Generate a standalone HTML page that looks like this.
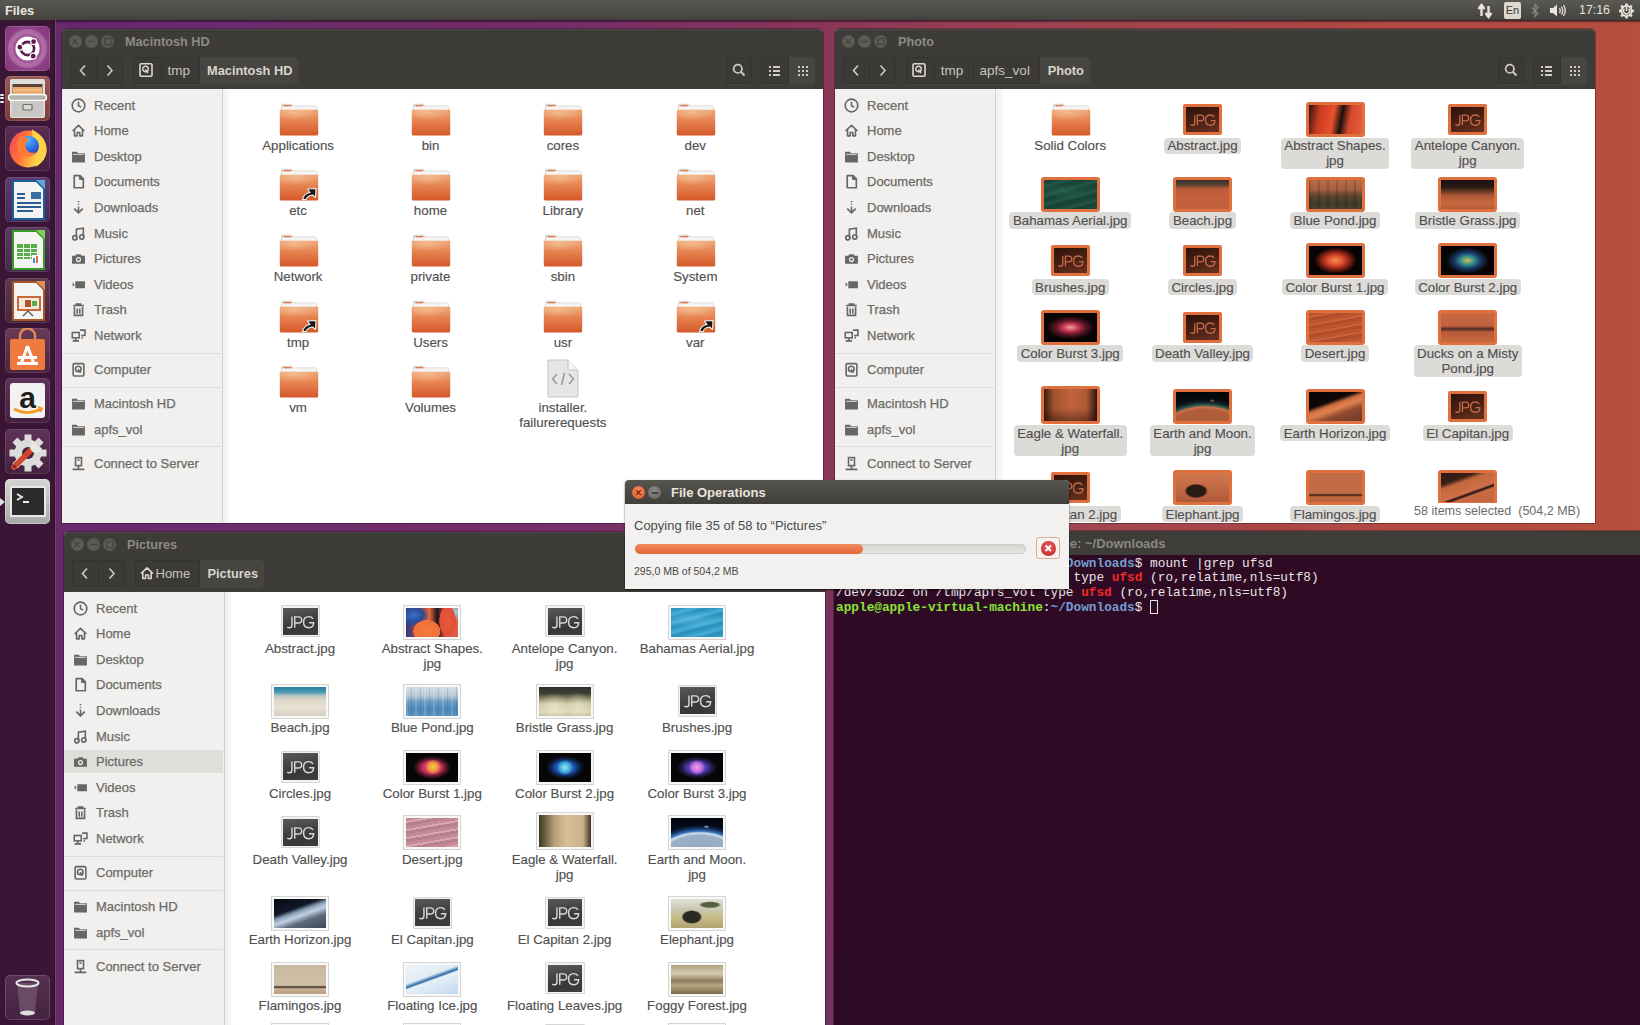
<!DOCTYPE html><html><head><meta charset="utf-8"><style>
*{box-sizing:border-box}
html,body{margin:0;padding:0}
body{width:1640px;height:1025px;overflow:hidden;position:relative;font-family:"Liberation Sans",sans-serif;background:#6d2a6a}
.a{position:absolute}
#launcher{left:0;top:20px;width:56px;height:1005px;background:#3a1535;border-right:1px solid #6e4a6c;box-shadow:inset -1px 0 0 #2e0f2a}
.tile{position:absolute;left:5px;width:45px;height:45px;border-radius:5px;overflow:hidden}
.win{position:absolute;overflow:hidden;border-radius:4px 4px 0 0;background:#fff;box-shadow:0 0 0 1px rgba(20,10,20,.35)}
.hb{position:absolute;left:0;top:0;right:0;height:60px;background:#3d3c38;box-shadow:inset 0 1px 0 rgba(255,255,255,.07)}
.wb{position:absolute;width:13px;height:13px;border-radius:50%;background:#5d5c57;box-shadow:inset 0 0 0 1px #53524d}
.ttl{position:absolute;font-weight:bold;font-size:12.7px;line-height:15px;color:#8e8b84;white-space:nowrap}
.tbg{position:absolute;top:27.5px;height:27px;border-radius:3px;background:#3b3a36;box-shadow:inset 0 0 0 1px #34332f,0 1px 0 rgba(255,255,255,.03)}
.pseg{position:absolute;top:0;height:27px;font-size:13.5px;line-height:28px;color:#c9c5bd;white-space:nowrap}
.pdiv{position:absolute;top:0;width:1px;height:27px;background:#34332f}
.side{position:absolute;left:0;top:60px;width:161px;bottom:0;background:#f1f0ee;border-right:1px solid #d2d0cc}
.si{position:absolute;left:32px;font-size:13px;line-height:15px;color:#6c6b68;white-space:nowrap;-webkit-text-stroke:.25px #6c6b68}
.sic{position:absolute;left:8.6px;width:15px;height:15px}
.sep{position:absolute;left:0;width:159px;height:1px;background:#dfddd9}
.lb{position:absolute;font-size:13.3px;line-height:15px;color:#505050;text-align:center;white-space:nowrap;-webkit-text-stroke:.15px #505050}
.lbs{position:absolute;border-radius:4px;background:#dddbd8}
.th{position:absolute}
.jpg{position:absolute;text-align:center;font-size:14px;line-height:27px;letter-spacing:-.3px}
</style></head><body><svg width="0" height="0" style="position:absolute"><defs><linearGradient id="fg" x1="0" y1="0" x2="0" y2="1"><stop offset="0" stop-color="#eea676"/><stop offset="0.45" stop-color="#e6804e"/><stop offset="1" stop-color="#d4582a"/></linearGradient><radialGradient id="fh" cx="0.4" cy="0.2" r="0.6"><stop offset="0" stop-color="#f8d0a8"/><stop offset="1" stop-color="#f8d0a8" stop-opacity="0"/></radialGradient></defs></svg><div class="a" style="left:0;top:0;width:1640px;height:1025px;background:linear-gradient(90deg,#66296a 0%,#6c2b6c 15%,#762d68 35%,#8a3658 50%,#a04450 65%,#b04a42 85%,#b54f3e 100%)"></div><div class="a" style="left:815px;top:528px;width:30px;height:497px;background:linear-gradient(#83345a,#75315f 25%,#72325f)"></div><div class="a" style="left:0;top:20px;width:1640px;height:3px;background:linear-gradient(rgba(30,12,30,.85),rgba(30,12,30,0))"></div><div class="a" style="left:0;top:0;width:1640px;height:20px;background:linear-gradient(#5a5852,#44423d)"></div><div class="a" style="left:5px;top:3.1px;font-weight:bold;font-size:12.8px;line-height:15px;color:#ebe7df">Files</div><div id="launcher" class="a">
  <!-- dash -->
  <div class="tile" style="top:5.5px;background:radial-gradient(circle at 50% 50%,#c27ab8 0%,#a85a9e 35%,#8e3e84 70%,#7e3476 100%);box-shadow:inset 0 0 0 1px rgba(255,255,255,.15)">
    <svg class="a" style="left:0;top:0" width="45" height="45" viewBox="0 0 45 45">
      <circle cx="22.5" cy="22.5" r="17" fill="none" stroke="rgba(255,255,255,.18)" stroke-width="5"/>
      <circle cx="22.5" cy="22.5" r="12" fill="#fff"/>
      <circle cx="22.5" cy="22.5" r="6.6" fill="none" stroke="#5a1a4c" stroke-width="2.6"/>
      <circle cx="14.8" cy="21.2" r="3" fill="#5a1a4c" stroke="#fff" stroke-width="1.2"/>
      <circle cx="28.6" cy="15.6" r="3" fill="#5a1a4c" stroke="#fff" stroke-width="1.2"/>
      <circle cx="28.2" cy="30.2" r="3" fill="#5a1a4c" stroke="#fff" stroke-width="1.2"/>
    </svg>
  </div>
  <!-- files -->
  <div class="tile" style="top:55.9px;background:linear-gradient(#9a5a56,#7a3c3a);box-shadow:inset 0 0 0 1px rgba(255,255,255,.12)">
    <svg class="a" style="left:0;top:0" width="45" height="45" viewBox="0 0 45 45">
      <rect x="5" y="3" width="35" height="39" rx="2" fill="#dededb"/>
      <rect x="7.5" y="8" width="30" height="11" fill="#5a4438"/>
      <rect x="8" y="11" width="29" height="7" fill="#eeaa6c"/>
      <rect x="8" y="13.5" width="29" height="1" fill="#f8d0a0"/>
      <rect x="3.5" y="18.5" width="38" height="6" rx="3" fill="#b4b3af" stroke="#fff" stroke-width="1.4"/>
      <rect x="6.5" y="25" width="32" height="16" fill="#c8c7c3"/>
      <rect x="18" y="28.5" width="9" height="5.5" rx="1" fill="#d8d8d6" stroke="#6f6e68" stroke-width="1.2"/>
    </svg>
  </div>
  <div class="a" style="left:0;top:73.5px;width:4px;height:2px;background:#e8e8e8;border-radius:1px"></div>
  <div class="a" style="left:0;top:77px;width:4px;height:2px;background:#e8e8e8;border-radius:1px"></div>
  <div class="a" style="left:0;top:80.5px;width:4px;height:2px;background:#e8e8e8;border-radius:1px"></div>
  <!-- firefox -->
  <div class="tile" style="top:106.3px;background:linear-gradient(#5a2d55,#47203f);box-shadow:inset 0 0 0 1px rgba(255,255,255,.12)">
    <svg class="a" style="left:0;top:0" width="45" height="45" viewBox="0 0 45 45">
      <defs>
        <linearGradient id="ffb" x1="0" y1="0" x2="1" y2="0.3"><stop offset="0" stop-color="#ee4660"/><stop offset="0.45" stop-color="#ff7336"/><stop offset="0.75" stop-color="#ffb840"/><stop offset="1" stop-color="#ffe060"/></linearGradient>
        <radialGradient id="ffg" cx="0.45" cy="0.2" r="0.9"><stop offset="0" stop-color="#50b8ff"/><stop offset="0.5" stop-color="#2a70e8"/><stop offset="1" stop-color="#2a2aa8"/></radialGradient>
      </defs>
      <circle cx="23" cy="23" r="18.5" fill="url(#ffb)"/>
      <path d="M27 3.5 C34 7 41 14 41.5 23 C42 31 37 38 30 41 C36 33 36 22 28 16 Z" fill="#ffd24a"/>
      <circle cx="24" cy="20" r="10" fill="url(#ffg)"/>
      <path d="M11 8 C15 12 22 11 24 14 C21 15 20 19 21 22 C22 26 27 28 31 26 C28 31 21 32 17 29 C12 25 11 18 13 13 Z" fill="#ff7a34"/>
      <path d="M9 12 L13 7 L14 14 Z" fill="#f25a50"/>
    </svg>
  </div>
  <!-- writer -->
  <div class="tile" style="top:156.7px;background:linear-gradient(#5b3c70,#432a57);box-shadow:inset 0 0 0 1px rgba(255,255,255,.1)">
    <svg class="a" style="left:0;top:0" width="45" height="45" viewBox="0 0 45 45">
      <path d="M7 3 H32 L40 11 V43 H7 Z" fill="#1d5f99"/>
      <path d="M9 5 H31 L38 12 V41 H9 Z" fill="#f4f4f2"/>
      <path d="M31 3 L40 12 V3 Z" fill="#5fa7d9"/>
      <rect x="26" y="15" width="10" height="7" fill="#3b6fa3"/>
      <rect x="12" y="16" width="8" height="2" fill="#2a5d93"/><rect x="12" y="20" width="8" height="2" fill="#2a5d93"/>
      <rect x="12" y="25" width="24" height="2" fill="#2a5d93"/><rect x="12" y="29" width="24" height="2" fill="#2a5d93"/><rect x="12" y="33" width="16" height="2" fill="#2a5d93"/>
    </svg>
  </div>
  <!-- calc -->
  <div class="tile" style="top:207.1px;background:linear-gradient(#5a3d5e,#46284a);box-shadow:inset 0 0 0 1px rgba(255,255,255,.1)">
    <svg class="a" style="left:0;top:0" width="45" height="45" viewBox="0 0 45 45">
      <path d="M7 3 H32 L40 11 V43 H7 Z" fill="#3a9a2a"/>
      <path d="M9 5 H31 L38 12 V41 H9 Z" fill="#f4f4f2"/>
      <path d="M31 3 L40 12 V3 Z" fill="#7fcf5a"/>
      <g fill="#5aae4a"><rect x="12" y="17" width="20" height="15"/></g>
      <g fill="#f4f4f2"><rect x="12" y="21" width="20" height="1"/><rect x="12" y="25" width="20" height="1"/><rect x="12" y="29" width="20" height="1"/><rect x="18" y="17" width="1" height="15"/><rect x="25" y="17" width="1" height="15"/></g>
      <rect x="27" y="28" width="9" height="9" fill="#fff"/><rect x="28" y="31" width="2" height="5" fill="#3c8fd9"/><rect x="31" y="29" width="2" height="7" fill="#e86a3a"/>
    </svg>
  </div>
  <!-- impress -->
  <div class="tile" style="top:257.5px;background:linear-gradient(#5c3a50,#47263d);box-shadow:inset 0 0 0 1px rgba(255,255,255,.1)">
    <svg class="a" style="left:0;top:0" width="45" height="45" viewBox="0 0 45 45">
      <path d="M7 3 H32 L40 11 V43 H7 Z" fill="#a8552a"/>
      <path d="M9 5 H31 L38 12 V41 H9 Z" fill="#f4f4f2"/>
      <path d="M31 3 L40 12 V3 Z" fill="#e0925a"/>
      <rect x="12" y="18" width="24" height="15" fill="#c86a3a"/>
      <rect x="14" y="20" width="20" height="11" fill="#f6e8dc"/>
      <rect x="20" y="22" width="6" height="7" fill="#b0552a"/><rect x="27" y="23" width="5" height="5" fill="#5aae4a"/>
      <path d="M23 33 L18 38 M23 33 L28 38" stroke="#555" stroke-width="1.2"/>
    </svg>
  </div>
  <!-- software -->
  <div class="tile" style="top:307.9px;background:linear-gradient(#6a3a56,#4a2640);box-shadow:inset 0 0 0 1px rgba(255,255,255,.1)">
    <svg class="a" style="left:0;top:0" width="45" height="45" viewBox="0 0 45 45">
      <path d="M15 12 V8 A7 7 0 0 1 30 8 V12" fill="none" stroke="#e08a5a" stroke-width="2.5"/>
      <rect x="5" y="11" width="35" height="31" rx="2" fill="#ef7a3f"/>
      <path d="M22.5 18 L16 36 M22.5 18 L29 36" stroke="#fff" stroke-width="3"/>
      <rect x="13" y="28" width="19" height="3" fill="#fff"/>
      <rect x="12" y="34" width="21" height="3" fill="#fff"/>
    </svg>
  </div>
  <!-- amazon -->
  <div class="tile" style="top:358.3px;background:linear-gradient(#5e3358,#46223f);box-shadow:inset 0 0 0 1px rgba(255,255,255,.1)">
    <svg class="a" style="left:0;top:0" width="45" height="45" viewBox="0 0 45 45">
      <rect x="5" y="5" width="35" height="35" rx="3" fill="#f2f2f2"/>
      <text x="22.5" y="30" text-anchor="middle" font-family="Liberation Sans" font-weight="bold" font-size="30" fill="#1e1e1e">a</text>
      <path d="M9 31 Q22 38 36 31" fill="none" stroke="#f39a1f" stroke-width="2.6"/>
      <path d="M33 29 L37 30.5 L35 34" fill="none" stroke="#f39a1f" stroke-width="2"/>
    </svg>
  </div>
  <!-- settings -->
  <div class="tile" style="top:408.7px;background:linear-gradient(#5e3358,#46223f);box-shadow:inset 0 0 0 1px rgba(255,255,255,.1)">
    <svg class="a" style="left:0;top:0" width="45" height="45" viewBox="0 0 45 45">
      <g fill="#dcdcda">
        <circle cx="23" cy="24" r="13.5"/>
        <rect x="19.5" y="5.5" width="7" height="37"/><rect x="4.5" y="20.5" width="37" height="7"/>
        <rect x="19.5" y="5.5" width="7" height="37" transform="rotate(45 23 24)"/><rect x="19.5" y="5.5" width="7" height="37" transform="rotate(-45 23 24)"/>
      </g>
      <circle cx="23" cy="24" r="6" fill="#4a2640"/>
      <path d="M9 38 L27 20" stroke="#d2452f" stroke-width="5.5" stroke-linecap="round"/>
      <circle cx="9.5" cy="37.5" r="1.3" fill="#5a2020"/>
      <path d="M27 20 L31 16" stroke="#e8e8e6" stroke-width="5"/>
      <path d="M28.5 12.5 A6 6 0 1 0 37 19 L33.5 18 L31 15.5 Z" fill="#e8e8e6"/>
    </svg>
  </div>
  <!-- terminal -->
  <div class="tile" style="top:459.1px;background:linear-gradient(#d4d4d2,#a8a8a6);box-shadow:inset 0 0 0 1px rgba(255,255,255,.3)">
    <svg class="a" style="left:0;top:0" width="45" height="45" viewBox="0 0 45 45">
      <rect x="5" y="7" width="36" height="31" fill="#e8e8e6"/>
      <rect x="7" y="9" width="32" height="27" fill="#2b2b2b"/>
      <path d="M12 15 L17 18 L12 21" fill="none" stroke="#eee" stroke-width="1.8"/>
      <rect x="18" y="22" width="6" height="2" fill="#eee"/>
    </svg>
  </div>
  <div class="a" style="left:0;top:478.1px;width:0;height:0;border-top:4px solid transparent;border-bottom:4px solid transparent;border-left:5px solid #ddd"></div>
  <!-- trash -->
  <div class="tile" style="top:955.2px;background:linear-gradient(#553050,#452340);box-shadow:inset 0 0 0 1px rgba(255,255,255,.15)">
    <svg class="a" style="left:0;top:0" width="45" height="45" viewBox="0 0 45 45">
      <path d="M12 8 L33 8 L30 38 L15 38 Z" fill="#6a4a66"/>
      <ellipse cx="22.5" cy="8" rx="11" ry="3.5" fill="none" stroke="#e6e6e4" stroke-width="2"/>
      <ellipse cx="22.5" cy="38" rx="7.5" ry="2.5" fill="#dcdcda"/>
    </svg>
  </div>
</div>
<svg class="a" style="left:1477px;top:2px" width="17" height="17"><path d="M4.5 14 V4 M1.5 7 L4.5 3 L7.5 7" fill="none" stroke="#e8e4dc" stroke-width="2.4"/><path d="M11.5 4 V14 M8.5 11 L11.5 15 L14.5 11" fill="none" stroke="#e8e4dc" stroke-width="2.4"/></svg><div class="a" style="left:1504px;top:2px;width:17px;height:17px;background:#dedad2;border-radius:2px;font-size:11px;line-height:17px;text-align:center;color:#3a3935">En</div><svg class="a" style="left:1530px;top:3px" width="10" height="15"><path d="M2 4.5 L8 10.5 L5 13.5 V1.5 L8 4.5 L2 10.5" fill="none" stroke="#8a8882" stroke-width="1.2"/></svg><svg class="a" style="left:1549px;top:3px" width="18" height="15"><path d="M1 5 H4 L8 1.5 V13.5 L4 10 H1 Z" fill="#e8e4dc"/><path d="M10.5 5 Q12 7.5 10.5 10 M12.5 3.5 Q15 7.5 12.5 11.5 M14.5 2 Q18 7.5 14.5 13" fill="none" stroke="#e8e4dc" stroke-width="1.3"/></svg><div class="a" style="left:1579px;top:3.4px;font-size:12.4px;line-height:15px;color:#e6e2da">17:16</div><svg class="a" style="left:1618px;top:2px" width="17" height="17"><g fill="#e8e4dc"><circle cx="8.5" cy="9" r="6"/><rect x="7.2" y="1.5" width="2.6" height="15" transform="rotate(0 8.5 9)"/><rect x="7.2" y="1.5" width="2.6" height="15" transform="rotate(45 8.5 9)"/><rect x="7.2" y="1.5" width="2.6" height="15" transform="rotate(90 8.5 9)"/><rect x="7.2" y="1.5" width="2.6" height="15" transform="rotate(135 8.5 9)"/></g><circle cx="8.5" cy="9" r="4.2" fill="#4d4b46"/><path d="M6.3 6.8 A3 3 0 1 0 10.7 6.8" fill="none" stroke="#e8e4dc" stroke-width="1.4"/><path d="M8.5 4.5 V9" stroke="#e8e4dc" stroke-width="1.5"/></svg><div class="win" style="left:62px;top:29px;width:761px;height:494px"><div class="hb"><div class="wb" style="left:6.5px;top:6px"></div><div class="wb" style="left:22.9px;top:6px"></div><div class="wb" style="left:39.3px;top:6px"></div><svg class="a" style="left:0;top:0" width="60" height="25"><path d="M10.5 10 L15.5 15 M15.5 10 L10.5 15" stroke="#45443f" stroke-width="1.3"/><path d="M25.9 12.5 H32.9" stroke="#45443f" stroke-width="1.5"/><rect x="42.8" y="9.5" width="6" height="6" fill="none" stroke="#45443f" stroke-width="1.3"/></svg><div class="ttl" style="left:63px;top:5.9px">Macintosh HD</div><div class="tbg" style="left:8px;width:53px"></div><div class="a" style="left:34px;top:28px;width:1px;height:26px;background:#34332f"></div><svg class="a" style="left:8px;top:27.5px" width="53" height="27"><path d="M15 8.5 L10.5 13.5 L15 18.5" fill="none" stroke="#cfcbc3" stroke-width="1.6"/><path d="M37.5 8.5 L42 13.5 L37.5 18.5" fill="none" stroke="#cfcbc3" stroke-width="1.6"/></svg><div class="tbg" style="left:71px;width:164.6px;overflow:hidden"><svg class="a" style="left:6px;top:6.5px" width="14" height="14"><rect x="1" y="0.8" width="12" height="12.5" rx="1.3" fill="none" stroke="#dcd8d0" stroke-width="1.6"/><circle cx="6.5" cy="6" r="2.8" fill="none" stroke="#dcd8d0" stroke-width="1.4"/><path d="M6.3 6.5 L9 10.2" stroke="#dcd8d0" stroke-width="1.4"/></svg><div class="pdiv" style="left:27.6px"></div><div class="pseg" style="left:34.6px">tmp</div><div class="a" style="left:65.6px;top:0;width:99px;height:27px;background:#46453f;border-radius:0 3px 3px 0"></div><div class="pdiv" style="left:65.6px"></div><div class="pseg" style="left:74.1px;font-weight:bold;font-size:12.8px;color:#d9d5cd">Macintosh HD</div></div><div class="tbg" style="left:663.7px;width:26.3px"></div><svg class="a" style="left:670px;top:34px" width="14" height="14"><circle cx="5.8" cy="5.8" r="4.2" fill="none" stroke="#cfcbc3" stroke-width="1.7"/><path d="M9 9 L12.5 12.5" stroke="#cfcbc3" stroke-width="2"/></svg><div class="tbg" style="left:699.3px;width:53.7px"></div><div class="a" style="left:726px;top:27.5px;width:26.7px;height:27px;background:#46453f;border-radius:0 3px 3px 0"></div><div class="a" style="left:725.5px;top:28px;width:1px;height:26px;background:#34332f"></div><svg class="a" style="left:706px;top:36px" width="14" height="12"><g fill="#cfcbc3"><rect x="1" y="1" width="2" height="2"/><rect x="5" y="1" width="7" height="2"/><rect x="1" y="5" width="2" height="2"/><rect x="5" y="5" width="7" height="2"/><rect x="1" y="9" width="2" height="2"/><rect x="5" y="9" width="7" height="2"/></g></svg><svg class="a" style="left:735px;top:36px" width="12" height="12"><g fill="#cfcbc3"><rect x="1" y="1" width="2" height="2"/><rect x="1" y="5" width="2" height="2"/><rect x="1" y="9" width="2" height="2"/><rect x="5" y="1" width="2" height="2"/><rect x="5" y="5" width="2" height="2"/><rect x="5" y="9" width="2" height="2"/><rect x="9" y="1" width="2" height="2"/><rect x="9" y="5" width="2" height="2"/><rect x="9" y="9" width="2" height="2"/></g></svg></div><div class="a" style="left:161px;top:60px;width:8px;bottom:0;background:linear-gradient(90deg,#f0f0f0,#f6f6f6 60%,#fff)"></div><div class="side"><div class="sep" style="top:263.7px"></div><div class="sep" style="top:297.5px"></div><div class="sep" style="top:357.4px"></div><svg class="sic" style="top:8.700000000000003px" viewBox="0 0 14 14"><circle cx="7" cy="7" r="5.9" fill="none" stroke="#666664" stroke-width="1.55"/><path d="M7 3.5 V7.2 L9.5 8.5" fill="none" stroke="#666664" stroke-width="1.5"/></svg><div class="si" style="top:8.7px">Recent</div><svg class="sic" style="top:34.3px" viewBox="0 0 14 14"><path d="M1.5 7.5 L7 2.2 L12.5 7.5 M3.3 6.2 V12 H5.8 V8.8 H8.2 V12 H10.7 V6.2" fill="none" stroke="#666664" stroke-width="1.5" stroke-linejoin="round"/></svg><div class="si" style="top:34.3px">Home</div><svg class="sic" style="top:59.900000000000006px" viewBox="0 0 14 14"><path d="M1 2.5 H5.5 L6.5 4 H13 V12.5 H1 Z" fill="#666664"/><path d="M2 5 H12" stroke="#f0efed" stroke-width=".8"/></svg><div class="si" style="top:59.9px">Desktop</div><svg class="sic" style="top:85.4px" viewBox="0 0 14 14"><path d="M3 1.5 H8.5 L11.5 4.5 V12.8 H3 Z M8.3 1.5 V4.8 H11.5" fill="none" stroke="#666664" stroke-width="1.55" stroke-linejoin="round"/></svg><div class="si" style="top:85.4px">Documents</div><svg class="sic" style="top:111px" viewBox="0 0 14 14"><path d="M7 1 V2 M7 3.5 V4.5 M7 6 V11.5 M3 8 L7 12 L11 8" fill="none" stroke="#666664" stroke-width="1.5"/></svg><div class="si" style="top:111.0px">Downloads</div><svg class="sic" style="top:136.6px" viewBox="0 0 14 14"><path d="M5 11 V3 L11.5 2 V10" fill="none" stroke="#666664" stroke-width="1.5"/><circle cx="3.6" cy="11" r="2" fill="none" stroke="#666664" stroke-width="1.55"/><circle cx="10.1" cy="10.2" r="2" fill="none" stroke="#666664" stroke-width="1.55"/></svg><div class="si" style="top:136.6px">Music</div><svg class="sic" style="top:162.2px" viewBox="0 0 14 14"><path d="M1 4.5 H4 L5 3 H9 L10 4.5 H13 V12 H1 Z" fill="#666664"/><circle cx="7" cy="8" r="2.4" fill="#f0efed"/><circle cx="7" cy="8" r="1.2" fill="#666664"/></svg><div class="si" style="top:162.2px">Pictures</div><svg class="sic" style="top:187.7px" viewBox="0 0 14 14"><path d="M1.5 5 L3.5 7 L1.5 9 Z" fill="#666664"/><rect x="4" y="4" width="9" height="6.5" fill="#666664"/></svg><div class="si" style="top:187.7px">Videos</div><svg class="sic" style="top:213.3px" viewBox="0 0 14 14"><path d="M2 3.3 H12 M5 3 V1.8 H9 V3 M3.2 4.5 V12.5 H10.8 V4.5 M5.8 6 V11 M8.2 6 V11" fill="none" stroke="#666664" stroke-width="1.5"/></svg><div class="si" style="top:213.3px">Trash</div><svg class="sic" style="top:238.89999999999998px" viewBox="0 0 14 14"><rect x="1.2" y="4.2" width="6.5" height="5" fill="none" stroke="#666664" stroke-width="1.5"/><path d="M8.5 2 H13 V7 H9.5" fill="none" stroke="#666664" stroke-width="1.5"/><path d="M1.5 12 H7.5 M4.5 9.5 V12" stroke="#666664" stroke-width="1.5"/><path d="M10.5 8 V10" stroke="#666664" stroke-width="1.2"/></svg><div class="si" style="top:238.9px">Network</div><svg class="sic" style="top:273.2px" viewBox="0 0 14 14"><rect x="2" y="1.5" width="10" height="11.5" rx="1.2" fill="none" stroke="#666664" stroke-width="1.5"/><circle cx="6.8" cy="6.5" r="2.6" fill="none" stroke="#666664" stroke-width="1.5"/><path d="M6.5 6.8 L9 10" stroke="#666664" stroke-width="1.5"/></svg><div class="si" style="top:273.2px">Computer</div><svg class="sic" style="top:307.2px" viewBox="0 0 14 14"><path d="M1 2.5 H5.5 L6.5 4 H13 V12.5 H1 Z" fill="#666664"/><path d="M2 5 H12" stroke="#f0efed" stroke-width=".8"/></svg><div class="si" style="top:307.2px">Macintosh HD</div><svg class="sic" style="top:332.9px" viewBox="0 0 14 14"><path d="M1 2.5 H5.5 L6.5 4 H13 V12.5 H1 Z" fill="#666664"/><path d="M2 5 H12" stroke="#f0efed" stroke-width=".8"/></svg><div class="si" style="top:332.9px">apfs_vol</div><svg class="sic" style="top:366.9px" viewBox="0 0 14 14"><rect x="4.2" y="1.5" width="5.6" height="7.5" fill="none" stroke="#666664" stroke-width="1.5"/><rect x="6" y="3" width="2" height="1.5" fill="#666664"/><path d="M7 9 V12 M1.5 12.5 H12.5" stroke="#666664" stroke-width="1.55"/></svg><div class="si" style="top:366.9px">Connect to Server</div></div><svg class="th" style="left:216.6px;top:73.5px" width="40" height="33" viewBox="0 0 40 33">
<path d="M2 2.5 Q2 0.8 3.8 0.8 H12.5 L14.5 2.5 H36 Q37.8 2.5 37.8 4.3 V10 H2 Z" fill="#d8d6d2"/>
<rect x="3" y="3.3" width="34" height="6" fill="#f6f5f3"/>
<rect x="4.5" y="2" width="7.5" height="1.3" fill="#e2784a"/>
<path d="M0.8 6.8 H39.2 V31 Q39.2 32.6 37.6 32.6 H2.4 Q0.8 32.6 0.8 31 Z" fill="url(#fg)"/>
<path d="M0.8 6.8 H39.2 V20 Q20 14 0.8 20 Z" fill="url(#fh)" opacity=".55"/>
</svg><div class="lb" style="left:136.1px;width:200px;top:108.9px">Applications</div><svg class="th" style="left:349.0px;top:73.5px" width="40" height="33" viewBox="0 0 40 33">
<path d="M2 2.5 Q2 0.8 3.8 0.8 H12.5 L14.5 2.5 H36 Q37.8 2.5 37.8 4.3 V10 H2 Z" fill="#d8d6d2"/>
<rect x="3" y="3.3" width="34" height="6" fill="#f6f5f3"/>
<rect x="4.5" y="2" width="7.5" height="1.3" fill="#e2784a"/>
<path d="M0.8 6.8 H39.2 V31 Q39.2 32.6 37.6 32.6 H2.4 Q0.8 32.6 0.8 31 Z" fill="url(#fg)"/>
<path d="M0.8 6.8 H39.2 V20 Q20 14 0.8 20 Z" fill="url(#fh)" opacity=".55"/>
</svg><div class="lb" style="left:268.5px;width:200px;top:108.9px">bin</div><svg class="th" style="left:481.4px;top:73.5px" width="40" height="33" viewBox="0 0 40 33">
<path d="M2 2.5 Q2 0.8 3.8 0.8 H12.5 L14.5 2.5 H36 Q37.8 2.5 37.8 4.3 V10 H2 Z" fill="#d8d6d2"/>
<rect x="3" y="3.3" width="34" height="6" fill="#f6f5f3"/>
<rect x="4.5" y="2" width="7.5" height="1.3" fill="#e2784a"/>
<path d="M0.8 6.8 H39.2 V31 Q39.2 32.6 37.6 32.6 H2.4 Q0.8 32.6 0.8 31 Z" fill="url(#fg)"/>
<path d="M0.8 6.8 H39.2 V20 Q20 14 0.8 20 Z" fill="url(#fh)" opacity=".55"/>
</svg><div class="lb" style="left:400.9px;width:200px;top:108.9px">cores</div><svg class="th" style="left:613.8px;top:73.5px" width="40" height="33" viewBox="0 0 40 33">
<path d="M2 2.5 Q2 0.8 3.8 0.8 H12.5 L14.5 2.5 H36 Q37.8 2.5 37.8 4.3 V10 H2 Z" fill="#d8d6d2"/>
<rect x="3" y="3.3" width="34" height="6" fill="#f6f5f3"/>
<rect x="4.5" y="2" width="7.5" height="1.3" fill="#e2784a"/>
<path d="M0.8 6.8 H39.2 V31 Q39.2 32.6 37.6 32.6 H2.4 Q0.8 32.6 0.8 31 Z" fill="url(#fg)"/>
<path d="M0.8 6.8 H39.2 V20 Q20 14 0.8 20 Z" fill="url(#fh)" opacity=".55"/>
</svg><div class="lb" style="left:533.3px;width:200px;top:108.9px">dev</div><svg class="th" style="left:216.6px;top:138.5px" width="40" height="33" viewBox="0 0 40 33">
<path d="M2 2.5 Q2 0.8 3.8 0.8 H12.5 L14.5 2.5 H36 Q37.8 2.5 37.8 4.3 V10 H2 Z" fill="#d8d6d2"/>
<rect x="3" y="3.3" width="34" height="6" fill="#f6f5f3"/>
<rect x="4.5" y="2" width="7.5" height="1.3" fill="#e2784a"/>
<path d="M0.8 6.8 H39.2 V31 Q39.2 32.6 37.6 32.6 H2.4 Q0.8 32.6 0.8 31 Z" fill="url(#fg)"/>
<path d="M0.8 6.8 H39.2 V20 Q20 14 0.8 20 Z" fill="url(#fh)" opacity=".55"/>
<path d="M23.5 31.5 Q25 25.5 31 24.5 L28.5 21 L37 20.5 L36.5 29.5 L33.5 27 Q28.5 27.5 27 31.5 Z" fill="#161616" stroke="#f4f4f2" stroke-width="1.1" stroke-linejoin="round"/></svg><div class="lb" style="left:136.1px;width:200px;top:173.9px">etc</div><svg class="th" style="left:349.0px;top:138.5px" width="40" height="33" viewBox="0 0 40 33">
<path d="M2 2.5 Q2 0.8 3.8 0.8 H12.5 L14.5 2.5 H36 Q37.8 2.5 37.8 4.3 V10 H2 Z" fill="#d8d6d2"/>
<rect x="3" y="3.3" width="34" height="6" fill="#f6f5f3"/>
<rect x="4.5" y="2" width="7.5" height="1.3" fill="#e2784a"/>
<path d="M0.8 6.8 H39.2 V31 Q39.2 32.6 37.6 32.6 H2.4 Q0.8 32.6 0.8 31 Z" fill="url(#fg)"/>
<path d="M0.8 6.8 H39.2 V20 Q20 14 0.8 20 Z" fill="url(#fh)" opacity=".55"/>
</svg><div class="lb" style="left:268.5px;width:200px;top:173.9px">home</div><svg class="th" style="left:481.4px;top:138.5px" width="40" height="33" viewBox="0 0 40 33">
<path d="M2 2.5 Q2 0.8 3.8 0.8 H12.5 L14.5 2.5 H36 Q37.8 2.5 37.8 4.3 V10 H2 Z" fill="#d8d6d2"/>
<rect x="3" y="3.3" width="34" height="6" fill="#f6f5f3"/>
<rect x="4.5" y="2" width="7.5" height="1.3" fill="#e2784a"/>
<path d="M0.8 6.8 H39.2 V31 Q39.2 32.6 37.6 32.6 H2.4 Q0.8 32.6 0.8 31 Z" fill="url(#fg)"/>
<path d="M0.8 6.8 H39.2 V20 Q20 14 0.8 20 Z" fill="url(#fh)" opacity=".55"/>
</svg><div class="lb" style="left:400.9px;width:200px;top:173.9px">Library</div><svg class="th" style="left:613.8px;top:138.5px" width="40" height="33" viewBox="0 0 40 33">
<path d="M2 2.5 Q2 0.8 3.8 0.8 H12.5 L14.5 2.5 H36 Q37.8 2.5 37.8 4.3 V10 H2 Z" fill="#d8d6d2"/>
<rect x="3" y="3.3" width="34" height="6" fill="#f6f5f3"/>
<rect x="4.5" y="2" width="7.5" height="1.3" fill="#e2784a"/>
<path d="M0.8 6.8 H39.2 V31 Q39.2 32.6 37.6 32.6 H2.4 Q0.8 32.6 0.8 31 Z" fill="url(#fg)"/>
<path d="M0.8 6.8 H39.2 V20 Q20 14 0.8 20 Z" fill="url(#fh)" opacity=".55"/>
</svg><div class="lb" style="left:533.3px;width:200px;top:173.9px">net</div><svg class="th" style="left:216.6px;top:204.5px" width="40" height="33" viewBox="0 0 40 33">
<path d="M2 2.5 Q2 0.8 3.8 0.8 H12.5 L14.5 2.5 H36 Q37.8 2.5 37.8 4.3 V10 H2 Z" fill="#d8d6d2"/>
<rect x="3" y="3.3" width="34" height="6" fill="#f6f5f3"/>
<rect x="4.5" y="2" width="7.5" height="1.3" fill="#e2784a"/>
<path d="M0.8 6.8 H39.2 V31 Q39.2 32.6 37.6 32.6 H2.4 Q0.8 32.6 0.8 31 Z" fill="url(#fg)"/>
<path d="M0.8 6.8 H39.2 V20 Q20 14 0.8 20 Z" fill="url(#fh)" opacity=".55"/>
</svg><div class="lb" style="left:136.1px;width:200px;top:239.9px">Network</div><svg class="th" style="left:349.0px;top:204.5px" width="40" height="33" viewBox="0 0 40 33">
<path d="M2 2.5 Q2 0.8 3.8 0.8 H12.5 L14.5 2.5 H36 Q37.8 2.5 37.8 4.3 V10 H2 Z" fill="#d8d6d2"/>
<rect x="3" y="3.3" width="34" height="6" fill="#f6f5f3"/>
<rect x="4.5" y="2" width="7.5" height="1.3" fill="#e2784a"/>
<path d="M0.8 6.8 H39.2 V31 Q39.2 32.6 37.6 32.6 H2.4 Q0.8 32.6 0.8 31 Z" fill="url(#fg)"/>
<path d="M0.8 6.8 H39.2 V20 Q20 14 0.8 20 Z" fill="url(#fh)" opacity=".55"/>
</svg><div class="lb" style="left:268.5px;width:200px;top:239.9px">private</div><svg class="th" style="left:481.4px;top:204.5px" width="40" height="33" viewBox="0 0 40 33">
<path d="M2 2.5 Q2 0.8 3.8 0.8 H12.5 L14.5 2.5 H36 Q37.8 2.5 37.8 4.3 V10 H2 Z" fill="#d8d6d2"/>
<rect x="3" y="3.3" width="34" height="6" fill="#f6f5f3"/>
<rect x="4.5" y="2" width="7.5" height="1.3" fill="#e2784a"/>
<path d="M0.8 6.8 H39.2 V31 Q39.2 32.6 37.6 32.6 H2.4 Q0.8 32.6 0.8 31 Z" fill="url(#fg)"/>
<path d="M0.8 6.8 H39.2 V20 Q20 14 0.8 20 Z" fill="url(#fh)" opacity=".55"/>
</svg><div class="lb" style="left:400.9px;width:200px;top:239.9px">sbin</div><svg class="th" style="left:613.8px;top:204.5px" width="40" height="33" viewBox="0 0 40 33">
<path d="M2 2.5 Q2 0.8 3.8 0.8 H12.5 L14.5 2.5 H36 Q37.8 2.5 37.8 4.3 V10 H2 Z" fill="#d8d6d2"/>
<rect x="3" y="3.3" width="34" height="6" fill="#f6f5f3"/>
<rect x="4.5" y="2" width="7.5" height="1.3" fill="#e2784a"/>
<path d="M0.8 6.8 H39.2 V31 Q39.2 32.6 37.6 32.6 H2.4 Q0.8 32.6 0.8 31 Z" fill="url(#fg)"/>
<path d="M0.8 6.8 H39.2 V20 Q20 14 0.8 20 Z" fill="url(#fh)" opacity=".55"/>
</svg><div class="lb" style="left:533.3px;width:200px;top:239.9px">System</div><svg class="th" style="left:216.6px;top:270.5px" width="40" height="33" viewBox="0 0 40 33">
<path d="M2 2.5 Q2 0.8 3.8 0.8 H12.5 L14.5 2.5 H36 Q37.8 2.5 37.8 4.3 V10 H2 Z" fill="#d8d6d2"/>
<rect x="3" y="3.3" width="34" height="6" fill="#f6f5f3"/>
<rect x="4.5" y="2" width="7.5" height="1.3" fill="#e2784a"/>
<path d="M0.8 6.8 H39.2 V31 Q39.2 32.6 37.6 32.6 H2.4 Q0.8 32.6 0.8 31 Z" fill="url(#fg)"/>
<path d="M0.8 6.8 H39.2 V20 Q20 14 0.8 20 Z" fill="url(#fh)" opacity=".55"/>
<path d="M23.5 31.5 Q25 25.5 31 24.5 L28.5 21 L37 20.5 L36.5 29.5 L33.5 27 Q28.5 27.5 27 31.5 Z" fill="#161616" stroke="#f4f4f2" stroke-width="1.1" stroke-linejoin="round"/></svg><div class="lb" style="left:136.1px;width:200px;top:305.9px">tmp</div><svg class="th" style="left:349.0px;top:270.5px" width="40" height="33" viewBox="0 0 40 33">
<path d="M2 2.5 Q2 0.8 3.8 0.8 H12.5 L14.5 2.5 H36 Q37.8 2.5 37.8 4.3 V10 H2 Z" fill="#d8d6d2"/>
<rect x="3" y="3.3" width="34" height="6" fill="#f6f5f3"/>
<rect x="4.5" y="2" width="7.5" height="1.3" fill="#e2784a"/>
<path d="M0.8 6.8 H39.2 V31 Q39.2 32.6 37.6 32.6 H2.4 Q0.8 32.6 0.8 31 Z" fill="url(#fg)"/>
<path d="M0.8 6.8 H39.2 V20 Q20 14 0.8 20 Z" fill="url(#fh)" opacity=".55"/>
</svg><div class="lb" style="left:268.5px;width:200px;top:305.9px">Users</div><svg class="th" style="left:481.4px;top:270.5px" width="40" height="33" viewBox="0 0 40 33">
<path d="M2 2.5 Q2 0.8 3.8 0.8 H12.5 L14.5 2.5 H36 Q37.8 2.5 37.8 4.3 V10 H2 Z" fill="#d8d6d2"/>
<rect x="3" y="3.3" width="34" height="6" fill="#f6f5f3"/>
<rect x="4.5" y="2" width="7.5" height="1.3" fill="#e2784a"/>
<path d="M0.8 6.8 H39.2 V31 Q39.2 32.6 37.6 32.6 H2.4 Q0.8 32.6 0.8 31 Z" fill="url(#fg)"/>
<path d="M0.8 6.8 H39.2 V20 Q20 14 0.8 20 Z" fill="url(#fh)" opacity=".55"/>
</svg><div class="lb" style="left:400.9px;width:200px;top:305.9px">usr</div><svg class="th" style="left:613.8px;top:270.5px" width="40" height="33" viewBox="0 0 40 33">
<path d="M2 2.5 Q2 0.8 3.8 0.8 H12.5 L14.5 2.5 H36 Q37.8 2.5 37.8 4.3 V10 H2 Z" fill="#d8d6d2"/>
<rect x="3" y="3.3" width="34" height="6" fill="#f6f5f3"/>
<rect x="4.5" y="2" width="7.5" height="1.3" fill="#e2784a"/>
<path d="M0.8 6.8 H39.2 V31 Q39.2 32.6 37.6 32.6 H2.4 Q0.8 32.6 0.8 31 Z" fill="url(#fg)"/>
<path d="M0.8 6.8 H39.2 V20 Q20 14 0.8 20 Z" fill="url(#fh)" opacity=".55"/>
<path d="M23.5 31.5 Q25 25.5 31 24.5 L28.5 21 L37 20.5 L36.5 29.5 L33.5 27 Q28.5 27.5 27 31.5 Z" fill="#161616" stroke="#f4f4f2" stroke-width="1.1" stroke-linejoin="round"/></svg><div class="lb" style="left:533.3px;width:200px;top:305.9px">var</div><svg class="th" style="left:216.6px;top:336.0px" width="40" height="33" viewBox="0 0 40 33">
<path d="M2 2.5 Q2 0.8 3.8 0.8 H12.5 L14.5 2.5 H36 Q37.8 2.5 37.8 4.3 V10 H2 Z" fill="#d8d6d2"/>
<rect x="3" y="3.3" width="34" height="6" fill="#f6f5f3"/>
<rect x="4.5" y="2" width="7.5" height="1.3" fill="#e2784a"/>
<path d="M0.8 6.8 H39.2 V31 Q39.2 32.6 37.6 32.6 H2.4 Q0.8 32.6 0.8 31 Z" fill="url(#fg)"/>
<path d="M0.8 6.8 H39.2 V20 Q20 14 0.8 20 Z" fill="url(#fh)" opacity=".55"/>
</svg><div class="lb" style="left:136.1px;width:200px;top:371.4px">vm</div><svg class="th" style="left:349.0px;top:336.0px" width="40" height="33" viewBox="0 0 40 33">
<path d="M2 2.5 Q2 0.8 3.8 0.8 H12.5 L14.5 2.5 H36 Q37.8 2.5 37.8 4.3 V10 H2 Z" fill="#d8d6d2"/>
<rect x="3" y="3.3" width="34" height="6" fill="#f6f5f3"/>
<rect x="4.5" y="2" width="7.5" height="1.3" fill="#e2784a"/>
<path d="M0.8 6.8 H39.2 V31 Q39.2 32.6 37.6 32.6 H2.4 Q0.8 32.6 0.8 31 Z" fill="url(#fg)"/>
<path d="M0.8 6.8 H39.2 V20 Q20 14 0.8 20 Z" fill="url(#fh)" opacity=".55"/>
</svg><div class="lb" style="left:268.5px;width:200px;top:371.4px">Volumes</div><svg class="th" style="left:484.9px;top:329.5px" width="32" height="39" viewBox="0 0 32 39"><path d="M1 1 H21 L31 11 V38 H1 Z" fill="#e6e6e4" stroke="#c4c4c2" stroke-width="1"/><path d="M21 1 V11 H31" fill="#f6f6f4" stroke="#c4c4c2" stroke-width="1"/><path d="M10 15 L5.5 20 L10 25 M22 15 L26.5 20 L22 25 M17.5 14 L14.5 26" fill="none" stroke="#9a9a98" stroke-width="1.6"/></svg><div class="lb" style="left:400.9px;width:200px;top:371.4px">installer.</div><div class="lb" style="left:400.9px;width:200px;top:386.4px">failurerequests</div></div><div class="win" style="left:835px;top:29px;width:760px;height:494px"><div class="hb"><div class="wb" style="left:6.5px;top:6px"></div><div class="wb" style="left:22.9px;top:6px"></div><div class="wb" style="left:39.3px;top:6px"></div><svg class="a" style="left:0;top:0" width="60" height="25"><path d="M10.5 10 L15.5 15 M15.5 10 L10.5 15" stroke="#45443f" stroke-width="1.3"/><path d="M25.9 12.5 H32.9" stroke="#45443f" stroke-width="1.5"/><rect x="42.8" y="9.5" width="6" height="6" fill="none" stroke="#45443f" stroke-width="1.3"/></svg><div class="ttl" style="left:63px;top:5.9px">Photo</div><div class="tbg" style="left:8px;width:53px"></div><div class="a" style="left:34px;top:28px;width:1px;height:26px;background:#34332f"></div><svg class="a" style="left:8px;top:27.5px" width="53" height="27"><path d="M15 8.5 L10.5 13.5 L15 18.5" fill="none" stroke="#cfcbc3" stroke-width="1.6"/><path d="M37.5 8.5 L42 13.5 L37.5 18.5" fill="none" stroke="#cfcbc3" stroke-width="1.6"/></svg><div class="tbg" style="left:71px;width:183.9px;overflow:hidden"><svg class="a" style="left:6px;top:6.5px" width="14" height="14"><rect x="1" y="0.8" width="12" height="12.5" rx="1.3" fill="none" stroke="#dcd8d0" stroke-width="1.6"/><circle cx="6.5" cy="6" r="2.8" fill="none" stroke="#dcd8d0" stroke-width="1.4"/><path d="M6.3 6.5 L9 10.2" stroke="#dcd8d0" stroke-width="1.4"/></svg><div class="pdiv" style="left:27.8px"></div><div class="pseg" style="left:34.8px">tmp</div><div class="pdiv" style="left:66.6px"></div><div class="pseg" style="left:73.6px">apfs_vol</div><div class="a" style="left:133.2px;top:0;width:50.7px;height:27px;background:#46453f;border-radius:0 3px 3px 0"></div><div class="pdiv" style="left:133.2px"></div><div class="pseg" style="left:141.7px;font-weight:bold;font-size:12.8px;color:#d9d5cd">Photo</div></div><div class="tbg" style="left:662.7px;width:26.3px"></div><svg class="a" style="left:669px;top:34px" width="14" height="14"><circle cx="5.8" cy="5.8" r="4.2" fill="none" stroke="#cfcbc3" stroke-width="1.7"/><path d="M9 9 L12.5 12.5" stroke="#cfcbc3" stroke-width="2"/></svg><div class="tbg" style="left:698.3px;width:53.7px"></div><div class="a" style="left:725px;top:27.5px;width:26.7px;height:27px;background:#46453f;border-radius:0 3px 3px 0"></div><div class="a" style="left:724.5px;top:28px;width:1px;height:26px;background:#34332f"></div><svg class="a" style="left:705px;top:36px" width="14" height="12"><g fill="#cfcbc3"><rect x="1" y="1" width="2" height="2"/><rect x="5" y="1" width="7" height="2"/><rect x="1" y="5" width="2" height="2"/><rect x="5" y="5" width="7" height="2"/><rect x="1" y="9" width="2" height="2"/><rect x="5" y="9" width="7" height="2"/></g></svg><svg class="a" style="left:734px;top:36px" width="12" height="12"><g fill="#cfcbc3"><rect x="1" y="1" width="2" height="2"/><rect x="1" y="5" width="2" height="2"/><rect x="1" y="9" width="2" height="2"/><rect x="5" y="1" width="2" height="2"/><rect x="5" y="5" width="2" height="2"/><rect x="5" y="9" width="2" height="2"/><rect x="9" y="1" width="2" height="2"/><rect x="9" y="5" width="2" height="2"/><rect x="9" y="9" width="2" height="2"/></g></svg></div><div class="a" style="left:161px;top:60px;width:8px;bottom:0;background:linear-gradient(90deg,#f0f0f0,#f6f6f6 60%,#fff)"></div><div class="side"><div class="sep" style="top:263.7px"></div><div class="sep" style="top:297.5px"></div><div class="sep" style="top:357.4px"></div><svg class="sic" style="top:8.700000000000003px" viewBox="0 0 14 14"><circle cx="7" cy="7" r="5.9" fill="none" stroke="#666664" stroke-width="1.55"/><path d="M7 3.5 V7.2 L9.5 8.5" fill="none" stroke="#666664" stroke-width="1.5"/></svg><div class="si" style="top:8.7px">Recent</div><svg class="sic" style="top:34.3px" viewBox="0 0 14 14"><path d="M1.5 7.5 L7 2.2 L12.5 7.5 M3.3 6.2 V12 H5.8 V8.8 H8.2 V12 H10.7 V6.2" fill="none" stroke="#666664" stroke-width="1.5" stroke-linejoin="round"/></svg><div class="si" style="top:34.3px">Home</div><svg class="sic" style="top:59.900000000000006px" viewBox="0 0 14 14"><path d="M1 2.5 H5.5 L6.5 4 H13 V12.5 H1 Z" fill="#666664"/><path d="M2 5 H12" stroke="#f0efed" stroke-width=".8"/></svg><div class="si" style="top:59.9px">Desktop</div><svg class="sic" style="top:85.4px" viewBox="0 0 14 14"><path d="M3 1.5 H8.5 L11.5 4.5 V12.8 H3 Z M8.3 1.5 V4.8 H11.5" fill="none" stroke="#666664" stroke-width="1.55" stroke-linejoin="round"/></svg><div class="si" style="top:85.4px">Documents</div><svg class="sic" style="top:111px" viewBox="0 0 14 14"><path d="M7 1 V2 M7 3.5 V4.5 M7 6 V11.5 M3 8 L7 12 L11 8" fill="none" stroke="#666664" stroke-width="1.5"/></svg><div class="si" style="top:111.0px">Downloads</div><svg class="sic" style="top:136.6px" viewBox="0 0 14 14"><path d="M5 11 V3 L11.5 2 V10" fill="none" stroke="#666664" stroke-width="1.5"/><circle cx="3.6" cy="11" r="2" fill="none" stroke="#666664" stroke-width="1.55"/><circle cx="10.1" cy="10.2" r="2" fill="none" stroke="#666664" stroke-width="1.55"/></svg><div class="si" style="top:136.6px">Music</div><svg class="sic" style="top:162.2px" viewBox="0 0 14 14"><path d="M1 4.5 H4 L5 3 H9 L10 4.5 H13 V12 H1 Z" fill="#666664"/><circle cx="7" cy="8" r="2.4" fill="#f0efed"/><circle cx="7" cy="8" r="1.2" fill="#666664"/></svg><div class="si" style="top:162.2px">Pictures</div><svg class="sic" style="top:187.7px" viewBox="0 0 14 14"><path d="M1.5 5 L3.5 7 L1.5 9 Z" fill="#666664"/><rect x="4" y="4" width="9" height="6.5" fill="#666664"/></svg><div class="si" style="top:187.7px">Videos</div><svg class="sic" style="top:213.3px" viewBox="0 0 14 14"><path d="M2 3.3 H12 M5 3 V1.8 H9 V3 M3.2 4.5 V12.5 H10.8 V4.5 M5.8 6 V11 M8.2 6 V11" fill="none" stroke="#666664" stroke-width="1.5"/></svg><div class="si" style="top:213.3px">Trash</div><svg class="sic" style="top:238.89999999999998px" viewBox="0 0 14 14"><rect x="1.2" y="4.2" width="6.5" height="5" fill="none" stroke="#666664" stroke-width="1.5"/><path d="M8.5 2 H13 V7 H9.5" fill="none" stroke="#666664" stroke-width="1.5"/><path d="M1.5 12 H7.5 M4.5 9.5 V12" stroke="#666664" stroke-width="1.5"/><path d="M10.5 8 V10" stroke="#666664" stroke-width="1.2"/></svg><div class="si" style="top:238.9px">Network</div><svg class="sic" style="top:273.2px" viewBox="0 0 14 14"><rect x="2" y="1.5" width="10" height="11.5" rx="1.2" fill="none" stroke="#666664" stroke-width="1.5"/><circle cx="6.8" cy="6.5" r="2.6" fill="none" stroke="#666664" stroke-width="1.5"/><path d="M6.5 6.8 L9 10" stroke="#666664" stroke-width="1.5"/></svg><div class="si" style="top:273.2px">Computer</div><svg class="sic" style="top:307.2px" viewBox="0 0 14 14"><path d="M1 2.5 H5.5 L6.5 4 H13 V12.5 H1 Z" fill="#666664"/><path d="M2 5 H12" stroke="#f0efed" stroke-width=".8"/></svg><div class="si" style="top:307.2px">Macintosh HD</div><svg class="sic" style="top:332.9px" viewBox="0 0 14 14"><path d="M1 2.5 H5.5 L6.5 4 H13 V12.5 H1 Z" fill="#666664"/><path d="M2 5 H12" stroke="#f0efed" stroke-width=".8"/></svg><div class="si" style="top:332.9px">apfs_vol</div><svg class="sic" style="top:366.9px" viewBox="0 0 14 14"><rect x="4.2" y="1.5" width="5.6" height="7.5" fill="none" stroke="#666664" stroke-width="1.5"/><rect x="6" y="3" width="2" height="1.5" fill="#666664"/><path d="M7 9 V12 M1.5 12.5 H12.5" stroke="#666664" stroke-width="1.55"/></svg><div class="si" style="top:366.9px">Connect to Server</div></div><svg class="th" style="left:215.7px;top:73.5px" width="40" height="33" viewBox="0 0 40 33">
<path d="M2 2.5 Q2 0.8 3.8 0.8 H12.5 L14.5 2.5 H36 Q37.8 2.5 37.8 4.3 V10 H2 Z" fill="#d8d6d2"/>
<rect x="3" y="3.3" width="34" height="6" fill="#f6f5f3"/>
<rect x="4.5" y="2" width="7.5" height="1.3" fill="#e2784a"/>
<path d="M0.8 6.8 H39.2 V31 Q39.2 32.6 37.6 32.6 H2.4 Q0.8 32.6 0.8 31 Z" fill="url(#fg)"/>
<path d="M0.8 6.8 H39.2 V20 Q20 14 0.8 20 Z" fill="url(#fh)" opacity=".55"/>
</svg><div class="lb" style="left:135.2px;width:200px;top:109.4px">Solid Colors</div><div class="th" style="left:348.0px;top:75.0px;width:39px;height:31px;background:#e0703e;border-radius:2px;padding:3px"><svg style="display:block;background:linear-gradient(160deg,#2e120a,#4a2214 55%,#6a3220)" width="33" height="25" viewBox="0 0 33 26"><path d="M8.5 8.3 V16.3 Q8.5 19 6.2 19 Q4.8 19 4 18.2 M11.2 19 V8.5 H14.6 Q17.9 8.5 17.9 11.5 Q17.9 14.5 14.6 14.5 H11.2 M28.8 10.4 Q27.4 8.3 24.6 8.3 Q19.7 8.3 19.7 13.6 Q19.7 19 24.6 19 Q29.4 19 29.4 14.2 H25" fill="none" stroke="#c46a4a" stroke-width="1.35"/></svg></div><div class="lbs" style="left:328.9px;top:108.5px;width:77.2px;height:16.5px"></div><div class="lb" style="left:267.5px;width:200px;top:109.4px">Abstract.jpg</div><div class="th" style="left:470.5px;top:73.0px;width:59px;height:35px;border:3px solid #e0703e;border-radius:3px;background:linear-gradient(100deg,#2a1410 0%,#c83a20 20%,#e8502a 45%,#1a1010 60%,#d8482a 75%,#e06040 100%)"></div><div class="lbs" style="left:445.9px;top:108.5px;width:108.3px;height:31.5px"></div><div class="lb" style="left:400px;width:200px;top:109.4px">Abstract Shapes.</div><div class="lb" style="left:400px;width:200px;top:124.4px">jpg</div><div class="th" style="left:613.2px;top:75.0px;width:39px;height:31px;background:#e0703e;border-radius:2px;padding:3px"><svg style="display:block;background:linear-gradient(160deg,#2e120a,#4a2214 55%,#6a3220)" width="33" height="25" viewBox="0 0 33 26"><path d="M8.5 8.3 V16.3 Q8.5 19 6.2 19 Q4.8 19 4 18.2 M11.2 19 V8.5 H14.6 Q17.9 8.5 17.9 11.5 Q17.9 14.5 14.6 14.5 H11.2 M28.8 10.4 Q27.4 8.3 24.6 8.3 Q19.7 8.3 19.7 13.6 Q19.7 19 24.6 19 Q29.4 19 29.4 14.2 H25" fill="none" stroke="#c46a4a" stroke-width="1.35"/></svg></div><div class="lbs" style="left:576.3px;top:108.5px;width:112.7px;height:31.5px"></div><div class="lb" style="left:532.7px;width:200px;top:109.4px">Antelope Canyon.</div><div class="lb" style="left:532.7px;width:200px;top:124.4px">jpg</div><div class="th" style="left:205.7px;top:147.7px;width:59px;height:35px;border:3px solid #e0703e;border-radius:3px;background:radial-gradient(ellipse 60% 30% at 40% 40%,rgba(60,120,100,.35),rgba(60,120,100,0)),repeating-linear-gradient(165deg,#17402f 0px,#1c4a3a 4px,#22564a 6px,#184232 9px)"></div><div class="lbs" style="left:174.4px;top:183.2px;width:121.6px;height:16.5px"></div><div class="lb" style="left:135.2px;width:200px;top:184.1px">Bahamas Aerial.jpg</div><div class="th" style="left:338.0px;top:147.7px;width:59px;height:35px;border:3px solid #e0703e;border-radius:3px;background:linear-gradient(#3a3028 0%,#504030 15%,#b85a3a 30%,#c6603e 60%,#c0603e 100%)"></div><div class="lbs" style="left:334.4px;top:183.2px;width:66.2px;height:16.5px"></div><div class="lb" style="left:267.5px;width:200px;top:184.1px">Beach.jpg</div><div class="th" style="left:470.5px;top:147.7px;width:59px;height:35px;border:3px solid #e0703e;border-radius:3px;background:repeating-linear-gradient(90deg,rgba(30,25,15,.18) 0 2px,rgba(0,0,0,0) 2px 5px,rgba(200,120,80,.12) 5px 6px,rgba(0,0,0,0) 6px 9px),linear-gradient(#b86a48 0%,#a86040 30%,#5a4430 55%,#3e3a2a 80%,#4a3e2e 100%)"></div><div class="lbs" style="left:455.1px;top:183.2px;width:89.8px;height:16.5px"></div><div class="lb" style="left:400px;width:200px;top:184.1px">Blue Pond.jpg</div><div class="th" style="left:603.2px;top:147.7px;width:59px;height:35px;border:3px solid #e0703e;border-radius:3px;background:linear-gradient(#1a1010 0%,#2a1a14 25%,#b05a38 55%,#c8683e 80%,#b05a38 100%)"></div><div class="lbs" style="left:580.4px;top:183.2px;width:104.5px;height:16.5px"></div><div class="lb" style="left:532.7px;width:200px;top:184.1px">Bristle Grass.jpg</div><div class="th" style="left:215.7px;top:216.3px;width:39px;height:31px;background:#e0703e;border-radius:2px;padding:3px"><svg style="display:block;background:linear-gradient(160deg,#2e120a,#4a2214 55%,#6a3220)" width="33" height="25" viewBox="0 0 33 26"><path d="M8.5 8.3 V16.3 Q8.5 19 6.2 19 Q4.8 19 4 18.2 M11.2 19 V8.5 H14.6 Q17.9 8.5 17.9 11.5 Q17.9 14.5 14.6 14.5 H11.2 M28.8 10.4 Q27.4 8.3 24.6 8.3 Q19.7 8.3 19.7 13.6 Q19.7 19 24.6 19 Q29.4 19 29.4 14.2 H25" fill="none" stroke="#c46a4a" stroke-width="1.35"/></svg></div><div class="lbs" style="left:196.6px;top:249.8px;width:77.2px;height:16.5px"></div><div class="lb" style="left:135.2px;width:200px;top:250.7px">Brushes.jpg</div><div class="th" style="left:348.0px;top:216.3px;width:39px;height:31px;background:#e0703e;border-radius:2px;padding:3px"><svg style="display:block;background:linear-gradient(160deg,#2e120a,#4a2214 55%,#6a3220)" width="33" height="25" viewBox="0 0 33 26"><path d="M8.5 8.3 V16.3 Q8.5 19 6.2 19 Q4.8 19 4 18.2 M11.2 19 V8.5 H14.6 Q17.9 8.5 17.9 11.5 Q17.9 14.5 14.6 14.5 H11.2 M28.8 10.4 Q27.4 8.3 24.6 8.3 Q19.7 8.3 19.7 13.6 Q19.7 19 24.6 19 Q29.4 19 29.4 14.2 H25" fill="none" stroke="#c46a4a" stroke-width="1.35"/></svg></div><div class="lbs" style="left:333.0px;top:249.8px;width:69.1px;height:16.5px"></div><div class="lb" style="left:267.5px;width:200px;top:250.7px">Circles.jpg</div><div class="th" style="left:470.5px;top:214.3px;width:59px;height:35px;border:3px solid #e0703e;border-radius:3px;background:radial-gradient(ellipse 40% 45% at 50% 50%,#f09050 0%,#e05030 35%,#a02818 60%,rgba(0,0,0,0) 100%),#080404"></div><div class="lbs" style="left:447.0px;top:249.8px;width:106.0px;height:16.5px"></div><div class="lb" style="left:400px;width:200px;top:250.7px">Color Burst 1.jpg</div><div class="th" style="left:603.2px;top:214.3px;width:59px;height:35px;border:3px solid #e0703e;border-radius:3px;background:radial-gradient(ellipse 40% 45% at 50% 50%,#d0c060 0%,#2a8a8a 35%,#1a3a6a 60%,rgba(0,0,0,0) 100%),#080404"></div><div class="lbs" style="left:579.7px;top:249.8px;width:106.0px;height:16.5px"></div><div class="lb" style="left:532.7px;width:200px;top:250.7px">Color Burst 2.jpg</div><div class="th" style="left:205.7px;top:280.5px;width:59px;height:35px;border:3px solid #e0703e;border-radius:3px;background:radial-gradient(ellipse 45% 40% at 50% 50%,#f0a0a0 0%,#c03050 35%,#601828 60%,rgba(0,0,0,0) 100%),#080404"></div><div class="lbs" style="left:182.2px;top:316.0px;width:106.0px;height:16.5px"></div><div class="lb" style="left:135.2px;width:200px;top:316.9px">Color Burst 3.jpg</div><div class="th" style="left:348.0px;top:282.5px;width:39px;height:31px;background:#e0703e;border-radius:2px;padding:3px"><svg style="display:block;background:linear-gradient(160deg,#2e120a,#4a2214 55%,#6a3220)" width="33" height="25" viewBox="0 0 33 26"><path d="M8.5 8.3 V16.3 Q8.5 19 6.2 19 Q4.8 19 4 18.2 M11.2 19 V8.5 H14.6 Q17.9 8.5 17.9 11.5 Q17.9 14.5 14.6 14.5 H11.2 M28.8 10.4 Q27.4 8.3 24.6 8.3 Q19.7 8.3 19.7 13.6 Q19.7 19 24.6 19 Q29.4 19 29.4 14.2 H25" fill="none" stroke="#c46a4a" stroke-width="1.35"/></svg></div><div class="lbs" style="left:316.6px;top:316.0px;width:101.9px;height:16.5px"></div><div class="lb" style="left:267.5px;width:200px;top:316.9px">Death Valley.jpg</div><div class="th" style="left:470.5px;top:280.5px;width:59px;height:35px;border:3px solid #e0703e;border-radius:3px;background:repeating-linear-gradient(170deg,#bc5430 0 3px,#c8603a 3px 5px,#b04e2c 5px 8px)"></div><div class="lbs" style="left:466.2px;top:316.0px;width:67.6px;height:16.5px"></div><div class="lb" style="left:400px;width:200px;top:316.9px">Desert.jpg</div><div class="th" style="left:603.2px;top:280.5px;width:59px;height:35px;border:3px solid #e0703e;border-radius:3px;background:linear-gradient(#c86a44 0%,#c06040 45%,#4a2a20 55%,#b85a3a 65%,#c8683e 100%)"></div><div class="lbs" style="left:578.6px;top:316.0px;width:108.2px;height:31.5px"></div><div class="lb" style="left:532.7px;width:200px;top:316.9px">Ducks on a Misty</div><div class="lb" style="left:532.7px;width:200px;top:331.9px">Pond.jpg</div><div class="th" style="left:205.7px;top:356.8px;width:59px;height:38.5px;border:3px solid #e0703e;border-radius:3px;background:linear-gradient(#00000000 60%,rgba(30,10,5,.45)),linear-gradient(90deg,#3a1a10 0%,#a0522e 18%,#c0643c 50%,#b05a38 80%,#2a1410 100%)"></div><div class="lbs" style="left:178.7px;top:395.8px;width:112.9px;height:31.5px"></div><div class="lb" style="left:135.2px;width:200px;top:396.7px">Eagle &amp; Waterfall.</div><div class="lb" style="left:135.2px;width:200px;top:411.7px">jpg</div><div class="th" style="left:338.0px;top:360.3px;width:59px;height:35px;border:3px solid #e0703e;border-radius:3px;background:radial-gradient(ellipse 130% 145% at 55% 140%,#a85a38 0%,#b05e3a 55%,#d07048 61%,#3a6050 65%,#102028 72%,rgba(10,16,32,0) 80%),radial-gradient(circle at 68% 35%,#b07050 0 2px,rgba(0,0,0,0) 3px),linear-gradient(#040608,#0a1418)"></div><div class="lbs" style="left:314.8px;top:395.8px;width:105.3px;height:31.5px"></div><div class="lb" style="left:267.5px;width:200px;top:396.7px">Earth and Moon.</div><div class="lb" style="left:267.5px;width:200px;top:411.7px">jpg</div><div class="th" style="left:470.5px;top:360.3px;width:59px;height:35px;border:3px solid #e0703e;border-radius:3px;background:linear-gradient(160deg,#080404 0%,#100808 35%,#d07040 45%,#e08050 55%,#904a30 70%,#6a3a28 100%)"></div><div class="lbs" style="left:445.1px;top:395.8px;width:109.7px;height:16.5px"></div><div class="lb" style="left:400px;width:200px;top:396.7px">Earth Horizon.jpg</div><div class="th" style="left:613.2px;top:362.3px;width:39px;height:31px;background:#e0703e;border-radius:2px;padding:3px"><svg style="display:block;background:linear-gradient(160deg,#2e120a,#4a2214 55%,#6a3220)" width="33" height="25" viewBox="0 0 33 26"><path d="M8.5 8.3 V16.3 Q8.5 19 6.2 19 Q4.8 19 4 18.2 M11.2 19 V8.5 H14.6 Q17.9 8.5 17.9 11.5 Q17.9 14.5 14.6 14.5 H11.2 M28.8 10.4 Q27.4 8.3 24.6 8.3 Q19.7 8.3 19.7 13.6 Q19.7 19 24.6 19 Q29.4 19 29.4 14.2 H25" fill="none" stroke="#c46a4a" stroke-width="1.35"/></svg></div><div class="lbs" style="left:587.8px;top:395.8px;width:89.8px;height:16.5px"></div><div class="lb" style="left:532.7px;width:200px;top:396.7px">El Capitan.jpg</div><div class="th" style="left:215.7px;top:443.3px;width:39px;height:31px;background:#e0703e;border-radius:2px;padding:3px"><svg style="display:block;background:linear-gradient(160deg,#2e120a,#4a2214 55%,#6a3220)" width="33" height="25" viewBox="0 0 33 26"><path d="M8.5 8.3 V16.3 Q8.5 19 6.2 19 Q4.8 19 4 18.2 M11.2 19 V8.5 H14.6 Q17.9 8.5 17.9 11.5 Q17.9 14.5 14.6 14.5 H11.2 M28.8 10.4 Q27.4 8.3 24.6 8.3 Q19.7 8.3 19.7 13.6 Q19.7 19 24.6 19 Q29.4 19 29.4 14.2 H25" fill="none" stroke="#c46a4a" stroke-width="1.35"/></svg></div><div class="lbs" style="left:184.8px;top:476.8px;width:100.9px;height:16.5px"></div><div class="lb" style="left:135.2px;width:200px;top:477.7px">El Capitan 2.jpg</div><div class="th" style="left:338.0px;top:441.3px;width:59px;height:35px;border:3px solid #e0703e;border-radius:3px;background:radial-gradient(ellipse 22% 25% at 38% 62%,#2a1a14 0%,#2a1a14 80%,rgba(0,0,0,0) 100%),linear-gradient(#d07850 0%,#c06a44 50%,#b05a3a 100%)"></div><div class="lbs" style="left:327.0px;top:476.8px;width:80.9px;height:16.5px"></div><div class="lb" style="left:267.5px;width:200px;top:477.7px">Elephant.jpg</div><div class="th" style="left:470.5px;top:441.3px;width:59px;height:35px;border:3px solid #e0703e;border-radius:3px;background:linear-gradient(#c06a44 0%,#c46c46 70%,#3a2018 76%,#c0683e 82%,#b86040 100%)"></div><div class="lbs" style="left:455.1px;top:476.8px;width:89.8px;height:16.5px"></div><div class="lb" style="left:400px;width:200px;top:477.7px">Flamingos.jpg</div><div class="th" style="left:603.2px;top:441.3px;width:59px;height:35px;border:3px solid #e0703e;border-radius:3px;background:linear-gradient(160deg,#2a1a14 0%,#3a2018 25%,#c0683e 35%,#d07048 60%,#1a1010 65%,#c86a44 70%,#c0683e 100%)"></div><div class="a" style="left:570px;top:474px;width:190px;height:23px;background:#fff"></div><div class="a" style="left:579px;top:474.5px;font-size:12.5px;line-height:15px;color:#6a6a68;white-space:pre">58 items selected  (504,2 MB)</div></div><div class="win" style="left:64px;top:532px;width:761px;height:493px"><div class="hb"><div class="wb" style="left:6.5px;top:6px"></div><div class="wb" style="left:22.9px;top:6px"></div><div class="wb" style="left:39.3px;top:6px"></div><svg class="a" style="left:0;top:0" width="60" height="25"><path d="M10.5 10 L15.5 15 M15.5 10 L10.5 15" stroke="#45443f" stroke-width="1.3"/><path d="M25.9 12.5 H32.9" stroke="#45443f" stroke-width="1.5"/><rect x="42.8" y="9.5" width="6" height="6" fill="none" stroke="#45443f" stroke-width="1.3"/></svg><div class="ttl" style="left:63px;top:5.9px">Pictures</div><div class="tbg" style="left:8px;width:53px"></div><div class="a" style="left:34px;top:28px;width:1px;height:26px;background:#34332f"></div><svg class="a" style="left:8px;top:27.5px" width="53" height="27"><path d="M15 8.5 L10.5 13.5 L15 18.5" fill="none" stroke="#cfcbc3" stroke-width="1.6"/><path d="M37.5 8.5 L42 13.5 L37.5 18.5" fill="none" stroke="#cfcbc3" stroke-width="1.6"/></svg><div class="tbg" style="left:71px;width:129px;overflow:hidden"><svg class="a" style="left:4.5px;top:6px" width="14" height="14"><path d="M1 7.5 L7 1.8 L13 7.5 M2.8 6 V12.5 H5.6 V9 H8.4 V12.5 H11.2 V6" fill="none" stroke="#dcd8d0" stroke-width="1.6" stroke-linejoin="round"/></svg><div class="pseg" style="left:20.5px;font-size:13px">Home</div><div class="a" style="left:64px;top:0;width:65px;height:27px;background:#46453f;border-radius:0 3px 3px 0"></div><div class="pdiv" style="left:64px"></div><div class="pseg" style="left:72.5px;font-weight:bold;font-size:12.8px;color:#d9d5cd">Pictures</div></div><div class="tbg" style="left:663.7px;width:26.3px"></div><svg class="a" style="left:670px;top:34px" width="14" height="14"><circle cx="5.8" cy="5.8" r="4.2" fill="none" stroke="#cfcbc3" stroke-width="1.7"/><path d="M9 9 L12.5 12.5" stroke="#cfcbc3" stroke-width="2"/></svg><div class="tbg" style="left:699.3px;width:53.7px"></div><div class="a" style="left:726px;top:27.5px;width:26.7px;height:27px;background:#46453f;border-radius:0 3px 3px 0"></div><div class="a" style="left:725.5px;top:28px;width:1px;height:26px;background:#34332f"></div><svg class="a" style="left:706px;top:36px" width="14" height="12"><g fill="#cfcbc3"><rect x="1" y="1" width="2" height="2"/><rect x="5" y="1" width="7" height="2"/><rect x="1" y="5" width="2" height="2"/><rect x="5" y="5" width="7" height="2"/><rect x="1" y="9" width="2" height="2"/><rect x="5" y="9" width="7" height="2"/></g></svg><svg class="a" style="left:735px;top:36px" width="12" height="12"><g fill="#cfcbc3"><rect x="1" y="1" width="2" height="2"/><rect x="1" y="5" width="2" height="2"/><rect x="1" y="9" width="2" height="2"/><rect x="5" y="1" width="2" height="2"/><rect x="5" y="5" width="2" height="2"/><rect x="5" y="9" width="2" height="2"/><rect x="9" y="1" width="2" height="2"/><rect x="9" y="5" width="2" height="2"/><rect x="9" y="9" width="2" height="2"/></g></svg></div><div class="a" style="left:161px;top:60px;width:8px;bottom:0;background:linear-gradient(90deg,#f0f0f0,#f6f6f6 60%,#fff)"></div><div class="side"><div class="sep" style="top:263.7px"></div><div class="sep" style="top:297.5px"></div><div class="sep" style="top:357.4px"></div><svg class="sic" style="top:8.700000000000003px" viewBox="0 0 14 14"><circle cx="7" cy="7" r="5.9" fill="none" stroke="#666664" stroke-width="1.55"/><path d="M7 3.5 V7.2 L9.5 8.5" fill="none" stroke="#666664" stroke-width="1.5"/></svg><div class="si" style="top:8.7px">Recent</div><svg class="sic" style="top:34.3px" viewBox="0 0 14 14"><path d="M1.5 7.5 L7 2.2 L12.5 7.5 M3.3 6.2 V12 H5.8 V8.8 H8.2 V12 H10.7 V6.2" fill="none" stroke="#666664" stroke-width="1.5" stroke-linejoin="round"/></svg><div class="si" style="top:34.3px">Home</div><svg class="sic" style="top:59.900000000000006px" viewBox="0 0 14 14"><path d="M1 2.5 H5.5 L6.5 4 H13 V12.5 H1 Z" fill="#666664"/><path d="M2 5 H12" stroke="#f0efed" stroke-width=".8"/></svg><div class="si" style="top:59.9px">Desktop</div><svg class="sic" style="top:85.4px" viewBox="0 0 14 14"><path d="M3 1.5 H8.5 L11.5 4.5 V12.8 H3 Z M8.3 1.5 V4.8 H11.5" fill="none" stroke="#666664" stroke-width="1.55" stroke-linejoin="round"/></svg><div class="si" style="top:85.4px">Documents</div><svg class="sic" style="top:111px" viewBox="0 0 14 14"><path d="M7 1 V2 M7 3.5 V4.5 M7 6 V11.5 M3 8 L7 12 L11 8" fill="none" stroke="#666664" stroke-width="1.5"/></svg><div class="si" style="top:111.0px">Downloads</div><svg class="sic" style="top:136.6px" viewBox="0 0 14 14"><path d="M5 11 V3 L11.5 2 V10" fill="none" stroke="#666664" stroke-width="1.5"/><circle cx="3.6" cy="11" r="2" fill="none" stroke="#666664" stroke-width="1.55"/><circle cx="10.1" cy="10.2" r="2" fill="none" stroke="#666664" stroke-width="1.55"/></svg><div class="si" style="top:136.6px">Music</div><div class="a" style="left:0;top:157.89999999999998px;width:159px;height:23.5px;background:#e0dedb"></div><svg class="sic" style="top:162.2px" viewBox="0 0 14 14"><path d="M1 4.5 H4 L5 3 H9 L10 4.5 H13 V12 H1 Z" fill="#666664"/><circle cx="7" cy="8" r="2.4" fill="#f0efed"/><circle cx="7" cy="8" r="1.2" fill="#666664"/></svg><div class="si" style="top:162.2px">Pictures</div><svg class="sic" style="top:187.7px" viewBox="0 0 14 14"><path d="M1.5 5 L3.5 7 L1.5 9 Z" fill="#666664"/><rect x="4" y="4" width="9" height="6.5" fill="#666664"/></svg><div class="si" style="top:187.7px">Videos</div><svg class="sic" style="top:213.3px" viewBox="0 0 14 14"><path d="M2 3.3 H12 M5 3 V1.8 H9 V3 M3.2 4.5 V12.5 H10.8 V4.5 M5.8 6 V11 M8.2 6 V11" fill="none" stroke="#666664" stroke-width="1.5"/></svg><div class="si" style="top:213.3px">Trash</div><svg class="sic" style="top:238.89999999999998px" viewBox="0 0 14 14"><rect x="1.2" y="4.2" width="6.5" height="5" fill="none" stroke="#666664" stroke-width="1.5"/><path d="M8.5 2 H13 V7 H9.5" fill="none" stroke="#666664" stroke-width="1.5"/><path d="M1.5 12 H7.5 M4.5 9.5 V12" stroke="#666664" stroke-width="1.5"/><path d="M10.5 8 V10" stroke="#666664" stroke-width="1.2"/></svg><div class="si" style="top:238.9px">Network</div><svg class="sic" style="top:273.2px" viewBox="0 0 14 14"><rect x="2" y="1.5" width="10" height="11.5" rx="1.2" fill="none" stroke="#666664" stroke-width="1.5"/><circle cx="6.8" cy="6.5" r="2.6" fill="none" stroke="#666664" stroke-width="1.5"/><path d="M6.5 6.8 L9 10" stroke="#666664" stroke-width="1.5"/></svg><div class="si" style="top:273.2px">Computer</div><svg class="sic" style="top:307.2px" viewBox="0 0 14 14"><path d="M1 2.5 H5.5 L6.5 4 H13 V12.5 H1 Z" fill="#666664"/><path d="M2 5 H12" stroke="#f0efed" stroke-width=".8"/></svg><div class="si" style="top:307.2px">Macintosh HD</div><svg class="sic" style="top:332.9px" viewBox="0 0 14 14"><path d="M1 2.5 H5.5 L6.5 4 H13 V12.5 H1 Z" fill="#666664"/><path d="M2 5 H12" stroke="#f0efed" stroke-width=".8"/></svg><div class="si" style="top:332.9px">apfs_vol</div><svg class="sic" style="top:366.9px" viewBox="0 0 14 14"><rect x="4.2" y="1.5" width="5.6" height="7.5" fill="none" stroke="#666664" stroke-width="1.5"/><rect x="6" y="3" width="2" height="1.5" fill="#666664"/><path d="M7 9 V12 M1.5 12.5 H12.5" stroke="#666664" stroke-width="1.55"/></svg><div class="si" style="top:366.9px">Connect to Server</div></div><div class="th" style="left:216.5px;top:73.2px;width:39.5px;height:32px;background:#f2f2f0;border:1px solid #d6d6d4;border-radius:1px;padding:1.5px"><svg style="display:block;background:linear-gradient(170deg,#5a5a5a 0%,#444 40%,#383838 70%,#3e3e3e 100%)" width="34.5" height="27" viewBox="0 0 33 26"><path d="M8.5 8.3 V16.3 Q8.5 19 6.2 19 Q4.8 19 4 18.2 M11.2 19 V8.5 H14.6 Q17.9 8.5 17.9 11.5 Q17.9 14.5 14.6 14.5 H11.2 M28.8 10.4 Q27.4 8.3 24.6 8.3 Q19.7 8.3 19.7 13.6 Q19.7 19 24.6 19 Q29.4 19 29.4 14.2 H25" fill="none" stroke="#dadada" stroke-width="1.35"/></svg></div><div class="lb" style="left:136px;width:200px;top:108.9px">Abstract.jpg</div><div class="th" style="left:339.3px;top:72.5px;width:58px;height:35px;border:1px solid #d4d4d2;padding:2px;background:#f8f8f8"><div style="width:100%;height:100%;background:radial-gradient(ellipse 34% 50% at 40% 80%,#f47a3a 0%,#f07038 75%,rgba(240,112,56,0) 78%),radial-gradient(ellipse 22% 70% at 80% 45%,#e8583a 0%,#e05038 70%,rgba(224,80,56,0) 74%),radial-gradient(ellipse 30% 40% at 15% 25%,#3a70c8 0%,#2a4a98 60%,rgba(42,74,152,0) 100%),radial-gradient(ellipse 20% 30% at 95% 15%,#90d8f0 0%,rgba(144,216,240,0) 100%),linear-gradient(90deg,#2a3a80 0%,#c04840 30%,#e86a38 45%,#1a1420 60%,#d85040 75%,#e06048 100%)"></div></div><div class="lb" style="left:268.3px;width:200px;top:108.9px">Abstract Shapes.</div><div class="lb" style="left:268.3px;width:200px;top:123.9px">jpg</div><div class="th" style="left:481.1px;top:73.2px;width:39.5px;height:32px;background:#f2f2f0;border:1px solid #d6d6d4;border-radius:1px;padding:1.5px"><svg style="display:block;background:linear-gradient(170deg,#5a5a5a 0%,#444 40%,#383838 70%,#3e3e3e 100%)" width="34.5" height="27" viewBox="0 0 33 26"><path d="M8.5 8.3 V16.3 Q8.5 19 6.2 19 Q4.8 19 4 18.2 M11.2 19 V8.5 H14.6 Q17.9 8.5 17.9 11.5 Q17.9 14.5 14.6 14.5 H11.2 M28.8 10.4 Q27.4 8.3 24.6 8.3 Q19.7 8.3 19.7 13.6 Q19.7 19 24.6 19 Q29.4 19 29.4 14.2 H25" fill="none" stroke="#dadada" stroke-width="1.35"/></svg></div><div class="lb" style="left:400.6px;width:200px;top:108.9px">Antelope Canyon.</div><div class="lb" style="left:400.6px;width:200px;top:123.9px">jpg</div><div class="th" style="left:604.0px;top:72.5px;width:58px;height:35px;border:1px solid #d4d4d2;padding:2px;background:#f8f8f8"><div style="width:100%;height:100%;background:radial-gradient(ellipse 60% 30% at 40% 40%,rgba(120,210,235,.4),rgba(120,210,235,0)),repeating-linear-gradient(165deg,#2a8cbc 0px,#34a0cb 4px,#48b0d6 6px,#2e92c0 9px)"></div></div><div class="lb" style="left:533px;width:200px;top:108.9px">Bahamas Aerial.jpg</div><div class="th" style="left:207.0px;top:151.8px;width:58px;height:35px;border:1px solid #d4d4d2;padding:2px;background:#f8f8f8"><div style="width:100%;height:100%;background:linear-gradient(#2a7fa0 0%,#4a9ab0 18%,#b8c8c4 30%,#ddd6c6 45%,#e8e2d4 70%,#d6d0c2 100%)"></div></div><div class="lb" style="left:136px;width:200px;top:188.2px">Beach.jpg</div><div class="th" style="left:339.3px;top:151.8px;width:58px;height:35px;border:1px solid #d4d4d2;padding:2px;background:#f8f8f8"><div style="width:100%;height:100%;background:repeating-linear-gradient(90deg,rgba(230,240,250,.18) 0 2px,rgba(0,0,0,0) 2px 5px,rgba(20,40,60,.12) 5px 6px,rgba(0,0,0,0) 6px 9px),linear-gradient(#d6dce2 0%,#b8c8d6 30%,#6a9cc4 50%,#4a88b8 75%,#5a92bc 100%)"></div></div><div class="lb" style="left:268.3px;width:200px;top:188.2px">Blue Pond.jpg</div><div class="th" style="left:471.6px;top:151.8px;width:58px;height:35px;border:1px solid #d4d4d2;padding:2px;background:#f8f8f8"><div style="width:100%;height:100%;background:radial-gradient(ellipse 30% 50% at 30% 70%,rgba(245,240,215,.6) 0%,rgba(245,240,215,0) 100%),radial-gradient(ellipse 25% 50% at 75% 65%,rgba(245,240,215,.5) 0%,rgba(245,240,215,0) 100%),linear-gradient(#2e322c 0%,#3a3e36 22%,#8a8868 40%,#cdc7a5 58%,#dcd6b6 85%,#c8c0a0 100%)"></div></div><div class="lb" style="left:400.6px;width:200px;top:188.2px">Bristle Grass.jpg</div><div class="th" style="left:613.5px;top:152.5px;width:39.5px;height:32px;background:#f2f2f0;border:1px solid #d6d6d4;border-radius:1px;padding:1.5px"><svg style="display:block;background:linear-gradient(170deg,#5a5a5a 0%,#444 40%,#383838 70%,#3e3e3e 100%)" width="34.5" height="27" viewBox="0 0 33 26"><path d="M8.5 8.3 V16.3 Q8.5 19 6.2 19 Q4.8 19 4 18.2 M11.2 19 V8.5 H14.6 Q17.9 8.5 17.9 11.5 Q17.9 14.5 14.6 14.5 H11.2 M28.8 10.4 Q27.4 8.3 24.6 8.3 Q19.7 8.3 19.7 13.6 Q19.7 19 24.6 19 Q29.4 19 29.4 14.2 H25" fill="none" stroke="#dadada" stroke-width="1.35"/></svg></div><div class="lb" style="left:533px;width:200px;top:188.2px">Brushes.jpg</div><div class="th" style="left:216.5px;top:218.59999999999997px;width:39.5px;height:32px;background:#f2f2f0;border:1px solid #d6d6d4;border-radius:1px;padding:1.5px"><svg style="display:block;background:linear-gradient(170deg,#5a5a5a 0%,#444 40%,#383838 70%,#3e3e3e 100%)" width="34.5" height="27" viewBox="0 0 33 26"><path d="M8.5 8.3 V16.3 Q8.5 19 6.2 19 Q4.8 19 4 18.2 M11.2 19 V8.5 H14.6 Q17.9 8.5 17.9 11.5 Q17.9 14.5 14.6 14.5 H11.2 M28.8 10.4 Q27.4 8.3 24.6 8.3 Q19.7 8.3 19.7 13.6 Q19.7 19 24.6 19 Q29.4 19 29.4 14.2 H25" fill="none" stroke="#dadada" stroke-width="1.35"/></svg></div><div class="lb" style="left:136px;width:200px;top:254.3px">Circles.jpg</div><div class="th" style="left:339.3px;top:217.89999999999998px;width:58px;height:35px;border:1px solid #d4d4d2;padding:2px;background:#f8f8f8"><div style="width:100%;height:100%;background:radial-gradient(ellipse 16% 26% at 52% 48%,#f0d040 0%,#f09040 60%,rgba(0,0,0,0) 100%),radial-gradient(ellipse 46% 50% at 50% 50%,#e84870 0%,#c83060 40%,rgba(200,48,96,.4) 60%,rgba(0,0,0,0) 80%),#060606"></div></div><div class="lb" style="left:268.3px;width:200px;top:254.3px">Color Burst 1.jpg</div><div class="th" style="left:471.6px;top:217.89999999999998px;width:58px;height:35px;border:1px solid #d4d4d2;padding:2px;background:#f8f8f8"><div style="width:100%;height:100%;background:radial-gradient(ellipse 16% 26% at 50% 50%,#a0e0f0 0%,#40b0d8 60%,rgba(0,0,0,0) 100%),radial-gradient(ellipse 46% 50% at 50% 50%,#3a80e0 0%,#1a50b0 40%,rgba(26,80,176,.4) 60%,rgba(0,0,0,0) 80%),#060606"></div></div><div class="lb" style="left:400.6px;width:200px;top:254.3px">Color Burst 2.jpg</div><div class="th" style="left:604.0px;top:217.89999999999998px;width:58px;height:35px;border:1px solid #d4d4d2;padding:2px;background:#f8f8f8"><div style="width:100%;height:100%;background:radial-gradient(ellipse 16% 26% at 50% 50%,#f0a0e0 0%,#c070e0 60%,rgba(0,0,0,0) 100%),radial-gradient(ellipse 48% 48% at 50% 50%,#8050d8 0%,#5038a8 40%,rgba(80,56,168,.4) 60%,rgba(0,0,0,0) 80%),#060608"></div></div><div class="lb" style="left:533px;width:200px;top:254.3px">Color Burst 3.jpg</div><div class="th" style="left:216.5px;top:284.0px;width:39.5px;height:32px;background:#f2f2f0;border:1px solid #d6d6d4;border-radius:1px;padding:1.5px"><svg style="display:block;background:linear-gradient(170deg,#5a5a5a 0%,#444 40%,#383838 70%,#3e3e3e 100%)" width="34.5" height="27" viewBox="0 0 33 26"><path d="M8.5 8.3 V16.3 Q8.5 19 6.2 19 Q4.8 19 4 18.2 M11.2 19 V8.5 H14.6 Q17.9 8.5 17.9 11.5 Q17.9 14.5 14.6 14.5 H11.2 M28.8 10.4 Q27.4 8.3 24.6 8.3 Q19.7 8.3 19.7 13.6 Q19.7 19 24.6 19 Q29.4 19 29.4 14.2 H25" fill="none" stroke="#dadada" stroke-width="1.35"/></svg></div><div class="lb" style="left:136px;width:200px;top:319.7px">Death Valley.jpg</div><div class="th" style="left:339.3px;top:283.3px;width:58px;height:35px;border:1px solid #d4d4d2;padding:2px;background:#f8f8f8"><div style="width:100%;height:100%;background:repeating-linear-gradient(170deg,#c48a98 0 3px,#d8a8b0 3px 5px,#b8808e 5px 8px)"></div></div><div class="lb" style="left:268.3px;width:200px;top:319.7px">Desert.jpg</div><div class="th" style="left:471.6px;top:280.3px;width:58px;height:38px;border:1px solid #d4d4d2;padding:2px;background:#f8f8f8"><div style="width:100%;height:100%;background:linear-gradient(90deg,#3a3a28 0%,#6a6040 12%,#b8a078 30%,#d8c098 55%,#c8b088 85%,#3a3020 100%)"></div></div><div class="lb" style="left:400.6px;width:200px;top:319.7px">Eagle &amp; Waterfall.</div><div class="lb" style="left:400.6px;width:200px;top:334.7px">jpg</div><div class="th" style="left:604.0px;top:283.3px;width:58px;height:35px;border:1px solid #d4d4d2;padding:2px;background:#f8f8f8"><div style="width:100%;height:100%;background:radial-gradient(ellipse 130% 145% at 55% 140%,#8ea4bc 0%,#9ab0c8 55%,#d0e0f0 61%,#3a78c0 65%,#143060 72%,rgba(10,20,40,0) 80%),radial-gradient(circle at 68% 35%,#c0c8d8 0 2px,rgba(0,0,0,0) 3px),linear-gradient(#02040c,#0a1830)"></div></div><div class="lb" style="left:533px;width:200px;top:319.7px">Earth and Moon.</div><div class="lb" style="left:533px;width:200px;top:334.7px">jpg</div><div class="th" style="left:207.0px;top:363.9px;width:58px;height:35px;border:1px solid #d4d4d2;padding:2px;background:#f8f8f8"><div style="width:100%;height:100%;background:linear-gradient(160deg,#050810 0%,#101828 35%,#8aa0b8 45%,#c0d0e0 55%,#5a6a78 70%,#3a4a58 100%)"></div></div><div class="lb" style="left:136px;width:200px;top:400.3px">Earth Horizon.jpg</div><div class="th" style="left:348.8px;top:364.59999999999997px;width:39.5px;height:32px;background:#f2f2f0;border:1px solid #d6d6d4;border-radius:1px;padding:1.5px"><svg style="display:block;background:linear-gradient(170deg,#5a5a5a 0%,#444 40%,#383838 70%,#3e3e3e 100%)" width="34.5" height="27" viewBox="0 0 33 26"><path d="M8.5 8.3 V16.3 Q8.5 19 6.2 19 Q4.8 19 4 18.2 M11.2 19 V8.5 H14.6 Q17.9 8.5 17.9 11.5 Q17.9 14.5 14.6 14.5 H11.2 M28.8 10.4 Q27.4 8.3 24.6 8.3 Q19.7 8.3 19.7 13.6 Q19.7 19 24.6 19 Q29.4 19 29.4 14.2 H25" fill="none" stroke="#dadada" stroke-width="1.35"/></svg></div><div class="lb" style="left:268.3px;width:200px;top:400.3px">El Capitan.jpg</div><div class="th" style="left:481.1px;top:364.59999999999997px;width:39.5px;height:32px;background:#f2f2f0;border:1px solid #d6d6d4;border-radius:1px;padding:1.5px"><svg style="display:block;background:linear-gradient(170deg,#5a5a5a 0%,#444 40%,#383838 70%,#3e3e3e 100%)" width="34.5" height="27" viewBox="0 0 33 26"><path d="M8.5 8.3 V16.3 Q8.5 19 6.2 19 Q4.8 19 4 18.2 M11.2 19 V8.5 H14.6 Q17.9 8.5 17.9 11.5 Q17.9 14.5 14.6 14.5 H11.2 M28.8 10.4 Q27.4 8.3 24.6 8.3 Q19.7 8.3 19.7 13.6 Q19.7 19 24.6 19 Q29.4 19 29.4 14.2 H25" fill="none" stroke="#dadada" stroke-width="1.35"/></svg></div><div class="lb" style="left:400.6px;width:200px;top:400.3px">El Capitan 2.jpg</div><div class="th" style="left:604.0px;top:363.9px;width:58px;height:35px;border:1px solid #d4d4d2;padding:2px;background:#f8f8f8"><div style="width:100%;height:100%;background:radial-gradient(ellipse 20% 24% at 40% 62%,#2a2a24 0%,#2a2a24 80%,rgba(0,0,0,0) 100%),radial-gradient(ellipse 22% 12% at 75% 20%,#586040 0%,#586040 70%,rgba(0,0,0,0) 100%),linear-gradient(#e0e2d8 0%,#c8c8b0 38%,#c8bc88 60%,#b0a470 100%)"></div></div><div class="lb" style="left:533px;width:200px;top:400.3px">Elephant.jpg</div><div class="th" style="left:207.0px;top:429.7px;width:58px;height:35px;border:1px solid #d4d4d2;padding:2px;background:#f8f8f8"><div style="width:100%;height:100%;background:linear-gradient(#c8b8a0 0%,#d0c0a4 70%,#3a3028 76%,#c8b090 82%,#b8a080 100%)"></div></div><div class="lb" style="left:136px;width:200px;top:466.1px">Flamingos.jpg</div><div class="th" style="left:339.3px;top:429.7px;width:58px;height:35px;border:1px solid #d4d4d2;padding:2px;background:#f8f8f8"><div style="width:100%;height:100%;background:linear-gradient(160deg,#f0f4f8 0%,#e0ecf4 40%,#2a6aa8 48%,#e8f0f8 52%,#c0d8ec 100%)"></div></div><div class="lb" style="left:268.3px;width:200px;top:466.1px">Floating Ice.jpg</div><div class="th" style="left:481.1px;top:430.4px;width:39.5px;height:32px;background:#f2f2f0;border:1px solid #d6d6d4;border-radius:1px;padding:1.5px"><svg style="display:block;background:linear-gradient(170deg,#5a5a5a 0%,#444 40%,#383838 70%,#3e3e3e 100%)" width="34.5" height="27" viewBox="0 0 33 26"><path d="M8.5 8.3 V16.3 Q8.5 19 6.2 19 Q4.8 19 4 18.2 M11.2 19 V8.5 H14.6 Q17.9 8.5 17.9 11.5 Q17.9 14.5 14.6 14.5 H11.2 M28.8 10.4 Q27.4 8.3 24.6 8.3 Q19.7 8.3 19.7 13.6 Q19.7 19 24.6 19 Q29.4 19 29.4 14.2 H25" fill="none" stroke="#dadada" stroke-width="1.35"/></svg></div><div class="lb" style="left:400.6px;width:200px;top:466.1px">Floating Leaves.jpg</div><div class="th" style="left:604.0px;top:429.7px;width:58px;height:35px;border:1px solid #d4d4d2;padding:2px;background:#f8f8f8"><div style="width:100%;height:100%;background:linear-gradient(#b0a080 0%,#d8ccb0 30%,#8a7a58 55%,#b8a880 70%,#7a6a48 100%)"></div></div><div class="lb" style="left:533px;width:200px;top:466.1px">Foggy Forest.jpg</div><div class="th" style="left:207.0px;top:491.0px;width:58px;height:35px;border:1px solid #d4d4d2;padding:2px;background:#f8f8f8"><div style="width:100%;height:100%;background:linear-gradient(#2a7fa0 0%,#4a9ab0 18%,#b8c8c4 30%,#ddd6c6 45%,#e8e2d4 70%,#d6d0c2 100%)"></div></div><div class="th" style="left:339.3px;top:491.0px;width:58px;height:35px;border:1px solid #d4d4d2;padding:2px;background:#f8f8f8"><div style="width:100%;height:100%;background:repeating-linear-gradient(90deg,rgba(230,240,250,.18) 0 2px,rgba(0,0,0,0) 2px 5px,rgba(20,40,60,.12) 5px 6px,rgba(0,0,0,0) 6px 9px),linear-gradient(#d6dce2 0%,#b8c8d6 30%,#6a9cc4 50%,#4a88b8 75%,#5a92bc 100%)"></div></div><div class="th" style="left:481.1px;top:491.70000000000005px;width:39.5px;height:32px;background:#f2f2f0;border:1px solid #d6d6d4;border-radius:1px;padding:1.5px"><svg style="display:block;background:linear-gradient(170deg,#5a5a5a 0%,#444 40%,#383838 70%,#3e3e3e 100%)" width="34.5" height="27" viewBox="0 0 33 26"><path d="M8.5 8.3 V16.3 Q8.5 19 6.2 19 Q4.8 19 4 18.2 M11.2 19 V8.5 H14.6 Q17.9 8.5 17.9 11.5 Q17.9 14.5 14.6 14.5 H11.2 M28.8 10.4 Q27.4 8.3 24.6 8.3 Q19.7 8.3 19.7 13.6 Q19.7 19 24.6 19 Q29.4 19 29.4 14.2 H25" fill="none" stroke="#dadada" stroke-width="1.35"/></svg></div><div class="th" style="left:604.0px;top:491.0px;width:58px;height:35px;border:1px solid #d4d4d2;padding:2px;background:#f8f8f8"><div style="width:100%;height:100%;background:linear-gradient(#b0a080 0%,#d8ccb0 30%,#8a7a58 55%,#b8a880 70%,#7a6a48 100%)"></div></div></div><div class="win" style="left:834px;top:531px;width:806px;height:494px;background:#2f0a25;border-radius:4px 0 0 0"><div class="a" style="left:0;top:0;width:806px;height:24px;background:#3e3d39"></div><div class="a" style="left:62px;top:4.6px;font-weight:bold;font-size:13px;line-height:15px;color:#8a8780;white-space:nowrap">apple@apple-virtual-machine: ~/Downloads</div><div class="a" style="left:2px;top:25.6px;font-family:'Liberation Mono',monospace;font-size:12.77px;line-height:14.5px;white-space:pre"><span style="color:#8ae234;font-weight:bold">apple@apple-virtual-machine</span><span style="color:#e8e6e2">:</span><span style="color:#729fcf;font-weight:bold">~/Downloads</span><span style="color:#e8e6e2">$ mount |grep ufsd</span></div><div class="a" style="left:2px;top:40.1px;font-family:'Liberation Mono',monospace;font-size:12.77px;line-height:14.5px;white-space:pre"><span style="color:#e8e6e2">/dev/sdb1 on /tmp/Macintosh HD type </span><span style="color:#ef2929;font-weight:bold">ufsd</span><span style="color:#e8e6e2"> (ro,relatime,nls=utf8)</span></div><div class="a" style="left:2px;top:54.6px;font-family:'Liberation Mono',monospace;font-size:12.77px;line-height:14.5px;white-space:pre"><span style="color:#e8e6e2">/dev/sdb2 on /tmp/apfs_vol type </span><span style="color:#ef2929;font-weight:bold">ufsd</span><span style="color:#e8e6e2"> (ro,relatime,nls=utf8)</span></div><div class="a" style="left:2px;top:69.1px;font-family:'Liberation Mono',monospace;font-size:12.77px;line-height:14.5px;white-space:pre"><span style="color:#8ae234;font-weight:bold">apple@apple-virtual-machine</span><span style="color:#e8e6e2">:</span><span style="color:#729fcf;font-weight:bold">~/Downloads</span><span style="color:#e8e6e2">$ </span><span style="display:inline-block;width:8px;height:14px;border:1px solid #e8e6e2;vertical-align:-3px"></span></div></div><div class="win" style="left:625px;top:480px;width:444px;height:109px;background:#f2f1f0;overflow:visible;box-shadow:0 1px 2px rgba(0,0,0,.7)"><div class="a" style="left:0;top:0;width:444px;height:23.5px;background:linear-gradient(#57554f,#3f3e3a);border-radius:4px 4px 0 0"></div><div class="a" style="left:7px;top:6.3px;width:13px;height:13px;border-radius:50%;background:radial-gradient(circle at 50% 35%,#f58a5a,#e2542a)"></div><svg class="a" style="left:7px;top:6.3px" width="13" height="13"><path d="M4.3 4.3 L8.7 8.7 M8.7 4.3 L4.3 8.7" stroke="#7a2a10" stroke-width="1.3"/></svg><div class="a" style="left:23px;top:6.3px;width:13px;height:13px;border-radius:50%;background:radial-gradient(circle at 50% 35%,#8a8984,#64635e)"></div><div class="a" style="left:26.5px;top:12.2px;width:6px;height:1.4px;background:#44433f"></div><div class="a" style="left:46px;top:4.5px;font-weight:bold;font-size:13px;line-height:15px;color:#e8e4dc;white-space:nowrap">File Operations</div><div class="a" style="left:9px;top:37.6px;font-size:13px;line-height:15px;color:#4a4a48;white-space:nowrap">Copying file 35 of 58 to “Pictures”</div><div class="a" style="left:9.5px;top:64.2px;width:391px;height:9.6px;border-radius:5px;background:linear-gradient(#d4d3d0,#e6e5e2);box-shadow:inset 0 0 0 1px #cfcdca"></div><div class="a" style="left:9.5px;top:64.2px;width:228px;height:9.6px;border-radius:5px;background:linear-gradient(#f08a5c,#e2663a)"></div><div class="a" style="left:9px;top:84.5px;font-size:10.5px;line-height:13px;color:#4a4a48;white-space:nowrap">295,0 MB of 504,2 MB</div><div class="a" style="left:411.3px;top:57.3px;width:23.5px;height:22.2px;border-radius:3px;border:1px solid #e2a890;background:#f4f3f1"></div><div class="a" style="left:416px;top:61px;width:14.5px;height:14.5px;border-radius:50%;background:radial-gradient(circle at 50% 35%,#e85a5a,#c02828)"></div><svg class="a" style="left:416px;top:61px" width="14.5" height="14.5"><path d="M4.5 4.5 L10 10 M10 4.5 L4.5 10" stroke="#fff" stroke-width="1.8"/></svg></div></body></html>
